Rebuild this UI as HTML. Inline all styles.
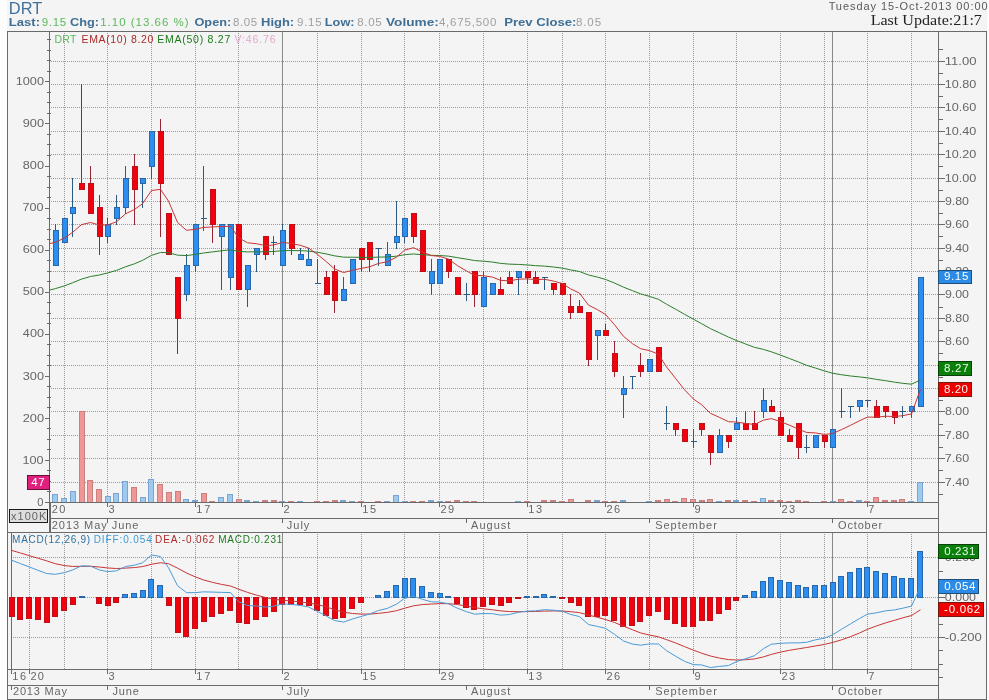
<!DOCTYPE html>
<html><head><meta charset="utf-8"><style>
html,body{margin:0;padding:0;background:#fdfdfd;width:989px;height:700px;overflow:hidden}
svg{display:block;will-change:transform}
</style></head><body>
<svg width="989" height="700" viewBox="0 0 989 700">
<g shape-rendering="crispEdges">
<rect x="0" y="0" width="989" height="700" fill="#fdfdfd" />
<rect x="7" y="0" width="980" height="700" fill="#f4f4f4" />
<line x1="51" y1="61.5" x2="938" y2="61.5" stroke="#9a9a9a" stroke-width="1" stroke-dasharray="1 1"/>
<line x1="51" y1="84.5" x2="938" y2="84.5" stroke="#9a9a9a" stroke-width="1" stroke-dasharray="1 1"/>
<line x1="51" y1="107.5" x2="938" y2="107.5" stroke="#9a9a9a" stroke-width="1" stroke-dasharray="1 1"/>
<line x1="51" y1="131.5" x2="938" y2="131.5" stroke="#9a9a9a" stroke-width="1" stroke-dasharray="1 1"/>
<line x1="51" y1="154.5" x2="938" y2="154.5" stroke="#9a9a9a" stroke-width="1" stroke-dasharray="1 1"/>
<line x1="51" y1="178.5" x2="938" y2="178.5" stroke="#9a9a9a" stroke-width="1" stroke-dasharray="1 1"/>
<line x1="51" y1="201.5" x2="938" y2="201.5" stroke="#9a9a9a" stroke-width="1" stroke-dasharray="1 1"/>
<line x1="51" y1="224.5" x2="938" y2="224.5" stroke="#9a9a9a" stroke-width="1" stroke-dasharray="1 1"/>
<line x1="51" y1="248.5" x2="938" y2="248.5" stroke="#9a9a9a" stroke-width="1" stroke-dasharray="1 1"/>
<line x1="51" y1="271.5" x2="938" y2="271.5" stroke="#9a9a9a" stroke-width="1" stroke-dasharray="1 1"/>
<line x1="51" y1="294.5" x2="938" y2="294.5" stroke="#9a9a9a" stroke-width="1" stroke-dasharray="1 1"/>
<line x1="51" y1="318.5" x2="938" y2="318.5" stroke="#9a9a9a" stroke-width="1" stroke-dasharray="1 1"/>
<line x1="51" y1="341.5" x2="938" y2="341.5" stroke="#9a9a9a" stroke-width="1" stroke-dasharray="1 1"/>
<line x1="51" y1="365.5" x2="938" y2="365.5" stroke="#9a9a9a" stroke-width="1" stroke-dasharray="1 1"/>
<line x1="51" y1="388.5" x2="938" y2="388.5" stroke="#9a9a9a" stroke-width="1" stroke-dasharray="1 1"/>
<line x1="51" y1="411.5" x2="938" y2="411.5" stroke="#9a9a9a" stroke-width="1" stroke-dasharray="1 1"/>
<line x1="51" y1="435.5" x2="938" y2="435.5" stroke="#9a9a9a" stroke-width="1" stroke-dasharray="1 1"/>
<line x1="51" y1="458.5" x2="938" y2="458.5" stroke="#9a9a9a" stroke-width="1" stroke-dasharray="1 1"/>
<line x1="51" y1="482.5" x2="938" y2="482.5" stroke="#9a9a9a" stroke-width="1" stroke-dasharray="1 1"/>
<line x1="64.5" y1="33" x2="64.5" y2="502" stroke="#9a9a9a" stroke-width="1" stroke-dasharray="1 1"/>
<line x1="107.5" y1="33" x2="107.5" y2="502" stroke="#9a9a9a" stroke-width="1" stroke-dasharray="1 1"/>
<line x1="151.5" y1="33" x2="151.5" y2="502" stroke="#9a9a9a" stroke-width="1" stroke-dasharray="1 1"/>
<line x1="195.5" y1="33" x2="195.5" y2="502" stroke="#9a9a9a" stroke-width="1" stroke-dasharray="1 1"/>
<line x1="238.5" y1="33" x2="238.5" y2="502" stroke="#9a9a9a" stroke-width="1" stroke-dasharray="1 1"/>
<line x1="317.5" y1="33" x2="317.5" y2="502" stroke="#9a9a9a" stroke-width="1" stroke-dasharray="1 1"/>
<line x1="361.5" y1="33" x2="361.5" y2="502" stroke="#9a9a9a" stroke-width="1" stroke-dasharray="1 1"/>
<line x1="404.5" y1="33" x2="404.5" y2="502" stroke="#9a9a9a" stroke-width="1" stroke-dasharray="1 1"/>
<line x1="439.5" y1="33" x2="439.5" y2="502" stroke="#9a9a9a" stroke-width="1" stroke-dasharray="1 1"/>
<line x1="483.5" y1="33" x2="483.5" y2="502" stroke="#9a9a9a" stroke-width="1" stroke-dasharray="1 1"/>
<line x1="527.5" y1="33" x2="527.5" y2="502" stroke="#9a9a9a" stroke-width="1" stroke-dasharray="1 1"/>
<line x1="562.5" y1="33" x2="562.5" y2="502" stroke="#9a9a9a" stroke-width="1" stroke-dasharray="1 1"/>
<line x1="605.5" y1="33" x2="605.5" y2="502" stroke="#9a9a9a" stroke-width="1" stroke-dasharray="1 1"/>
<line x1="649.5" y1="33" x2="649.5" y2="502" stroke="#9a9a9a" stroke-width="1" stroke-dasharray="1 1"/>
<line x1="693.5" y1="33" x2="693.5" y2="502" stroke="#9a9a9a" stroke-width="1" stroke-dasharray="1 1"/>
<line x1="736.5" y1="33" x2="736.5" y2="502" stroke="#9a9a9a" stroke-width="1" stroke-dasharray="1 1"/>
<line x1="780.5" y1="33" x2="780.5" y2="502" stroke="#9a9a9a" stroke-width="1" stroke-dasharray="1 1"/>
<line x1="824.5" y1="33" x2="824.5" y2="502" stroke="#9a9a9a" stroke-width="1" stroke-dasharray="1 1"/>
<line x1="867.5" y1="33" x2="867.5" y2="502" stroke="#9a9a9a" stroke-width="1" stroke-dasharray="1 1"/>
<line x1="911.5" y1="33" x2="911.5" y2="502" stroke="#9a9a9a" stroke-width="1" stroke-dasharray="1 1"/>
<line x1="282.5" y1="32" x2="282.5" y2="502" stroke="#8a8a8a" stroke-width="1"/>
<line x1="832.5" y1="32" x2="832.5" y2="502" stroke="#8a8a8a" stroke-width="1"/>
<line x1="13" y1="557.5" x2="938" y2="557.5" stroke="#9a9a9a" stroke-width="1" stroke-dasharray="1 1"/>
<line x1="13" y1="597.5" x2="938" y2="597.5" stroke="#9a9a9a" stroke-width="1" stroke-dasharray="1 1"/>
<line x1="13" y1="637.5" x2="938" y2="637.5" stroke="#9a9a9a" stroke-width="1" stroke-dasharray="1 1"/>
<line x1="29.5" y1="534" x2="29.5" y2="669" stroke="#9a9a9a" stroke-width="1" stroke-dasharray="1 1"/>
<line x1="64.5" y1="534" x2="64.5" y2="669" stroke="#9a9a9a" stroke-width="1" stroke-dasharray="1 1"/>
<line x1="107.5" y1="534" x2="107.5" y2="669" stroke="#9a9a9a" stroke-width="1" stroke-dasharray="1 1"/>
<line x1="151.5" y1="534" x2="151.5" y2="669" stroke="#9a9a9a" stroke-width="1" stroke-dasharray="1 1"/>
<line x1="195.5" y1="534" x2="195.5" y2="669" stroke="#9a9a9a" stroke-width="1" stroke-dasharray="1 1"/>
<line x1="238.5" y1="534" x2="238.5" y2="669" stroke="#9a9a9a" stroke-width="1" stroke-dasharray="1 1"/>
<line x1="317.5" y1="534" x2="317.5" y2="669" stroke="#9a9a9a" stroke-width="1" stroke-dasharray="1 1"/>
<line x1="361.5" y1="534" x2="361.5" y2="669" stroke="#9a9a9a" stroke-width="1" stroke-dasharray="1 1"/>
<line x1="404.5" y1="534" x2="404.5" y2="669" stroke="#9a9a9a" stroke-width="1" stroke-dasharray="1 1"/>
<line x1="439.5" y1="534" x2="439.5" y2="669" stroke="#9a9a9a" stroke-width="1" stroke-dasharray="1 1"/>
<line x1="483.5" y1="534" x2="483.5" y2="669" stroke="#9a9a9a" stroke-width="1" stroke-dasharray="1 1"/>
<line x1="527.5" y1="534" x2="527.5" y2="669" stroke="#9a9a9a" stroke-width="1" stroke-dasharray="1 1"/>
<line x1="562.5" y1="534" x2="562.5" y2="669" stroke="#9a9a9a" stroke-width="1" stroke-dasharray="1 1"/>
<line x1="605.5" y1="534" x2="605.5" y2="669" stroke="#9a9a9a" stroke-width="1" stroke-dasharray="1 1"/>
<line x1="649.5" y1="534" x2="649.5" y2="669" stroke="#9a9a9a" stroke-width="1" stroke-dasharray="1 1"/>
<line x1="693.5" y1="534" x2="693.5" y2="669" stroke="#9a9a9a" stroke-width="1" stroke-dasharray="1 1"/>
<line x1="736.5" y1="534" x2="736.5" y2="669" stroke="#9a9a9a" stroke-width="1" stroke-dasharray="1 1"/>
<line x1="780.5" y1="534" x2="780.5" y2="669" stroke="#9a9a9a" stroke-width="1" stroke-dasharray="1 1"/>
<line x1="824.5" y1="534" x2="824.5" y2="669" stroke="#9a9a9a" stroke-width="1" stroke-dasharray="1 1"/>
<line x1="867.5" y1="534" x2="867.5" y2="669" stroke="#9a9a9a" stroke-width="1" stroke-dasharray="1 1"/>
<line x1="911.5" y1="534" x2="911.5" y2="669" stroke="#9a9a9a" stroke-width="1" stroke-dasharray="1 1"/>
<line x1="282.5" y1="533" x2="282.5" y2="669" stroke="#8a8a8a" stroke-width="1"/>
<line x1="832.5" y1="533" x2="832.5" y2="669" stroke="#8a8a8a" stroke-width="1"/>
</g>
<g shape-rendering="crispEdges">
<rect x="52" y="494" width="6" height="8" fill="#6e9ccc" fill-opacity="0.9"/>
<rect x="53" y="495" width="4" height="7" fill="#a6d0f5" fill-opacity="0.85"/>
<rect x="61" y="498" width="6" height="4" fill="#6e9ccc" fill-opacity="0.9"/>
<rect x="62" y="499" width="4" height="3" fill="#a6d0f5" fill-opacity="0.85"/>
<rect x="70" y="491" width="6" height="11" fill="#6e9ccc" fill-opacity="0.9"/>
<rect x="71" y="492" width="4" height="10" fill="#a6d0f5" fill-opacity="0.85"/>
<rect x="79" y="411" width="6" height="91" fill="#c87474" fill-opacity="0.9"/>
<rect x="80" y="412" width="4" height="90" fill="#f49a9a" fill-opacity="0.85"/>
<rect x="87" y="480" width="6" height="22" fill="#c87474" fill-opacity="0.9"/>
<rect x="88" y="481" width="4" height="21" fill="#f49a9a" fill-opacity="0.85"/>
<rect x="96" y="489" width="6" height="13" fill="#c87474" fill-opacity="0.9"/>
<rect x="97" y="490" width="4" height="12" fill="#f49a9a" fill-opacity="0.85"/>
<rect x="105" y="496" width="6" height="6" fill="#6e9ccc" fill-opacity="0.9"/>
<rect x="106" y="497" width="4" height="5" fill="#a6d0f5" fill-opacity="0.85"/>
<rect x="113" y="493" width="6" height="9" fill="#6e9ccc" fill-opacity="0.9"/>
<rect x="114" y="494" width="4" height="8" fill="#a6d0f5" fill-opacity="0.85"/>
<rect x="122" y="481" width="6" height="21" fill="#6e9ccc" fill-opacity="0.9"/>
<rect x="123" y="482" width="4" height="20" fill="#a6d0f5" fill-opacity="0.85"/>
<rect x="131" y="487" width="6" height="15" fill="#c87474" fill-opacity="0.9"/>
<rect x="132" y="488" width="4" height="14" fill="#f49a9a" fill-opacity="0.85"/>
<rect x="140" y="497" width="6" height="5" fill="#6e9ccc" fill-opacity="0.9"/>
<rect x="141" y="498" width="4" height="4" fill="#a6d0f5" fill-opacity="0.85"/>
<rect x="148" y="479" width="6" height="23" fill="#6e9ccc" fill-opacity="0.9"/>
<rect x="149" y="480" width="4" height="22" fill="#a6d0f5" fill-opacity="0.85"/>
<rect x="157" y="484" width="6" height="18" fill="#c87474" fill-opacity="0.9"/>
<rect x="158" y="485" width="4" height="17" fill="#f49a9a" fill-opacity="0.85"/>
<rect x="166" y="492" width="6" height="10" fill="#c87474" fill-opacity="0.9"/>
<rect x="167" y="493" width="4" height="9" fill="#f49a9a" fill-opacity="0.85"/>
<rect x="175" y="491" width="6" height="11" fill="#c87474" fill-opacity="0.9"/>
<rect x="176" y="492" width="4" height="10" fill="#f49a9a" fill-opacity="0.85"/>
<rect x="183" y="499" width="6" height="3" fill="#6e9ccc" fill-opacity="0.9"/>
<rect x="184" y="500" width="4" height="2" fill="#a6d0f5" fill-opacity="0.85"/>
<rect x="192" y="500" width="6" height="2" fill="#6e9ccc" fill-opacity="0.9"/>
<rect x="201" y="493" width="6" height="9" fill="#c87474" fill-opacity="0.9"/>
<rect x="202" y="494" width="4" height="8" fill="#f49a9a" fill-opacity="0.85"/>
<rect x="209" y="501" width="6" height="1" fill="#c87474" fill-opacity="0.9"/>
<rect x="218" y="497" width="6" height="5" fill="#6e9ccc" fill-opacity="0.9"/>
<rect x="219" y="498" width="4" height="4" fill="#a6d0f5" fill-opacity="0.85"/>
<rect x="227" y="494" width="6" height="8" fill="#6e9ccc" fill-opacity="0.9"/>
<rect x="228" y="495" width="4" height="7" fill="#a6d0f5" fill-opacity="0.85"/>
<rect x="236" y="499" width="6" height="3" fill="#c87474" fill-opacity="0.9"/>
<rect x="237" y="500" width="4" height="2" fill="#f49a9a" fill-opacity="0.85"/>
<rect x="244" y="500" width="6" height="2" fill="#6e9ccc" fill-opacity="0.9"/>
<rect x="253" y="501" width="6" height="1" fill="#6e9ccc" fill-opacity="0.9"/>
<rect x="262" y="500" width="6" height="2" fill="#c87474" fill-opacity="0.9"/>
<rect x="271" y="500" width="6" height="2" fill="#c87474" fill-opacity="0.9"/>
<rect x="279" y="501" width="6" height="1" fill="#6e9ccc" fill-opacity="0.9"/>
<rect x="288" y="501" width="6" height="1" fill="#c87474" fill-opacity="0.9"/>
<rect x="297" y="501" width="6" height="1" fill="#6e9ccc" fill-opacity="0.9"/>
<rect x="314" y="501" width="6" height="1" fill="#c87474" fill-opacity="0.9"/>
<rect x="323" y="501" width="6" height="1" fill="#c87474" fill-opacity="0.9"/>
<rect x="332" y="500" width="6" height="2" fill="#c87474" fill-opacity="0.9"/>
<rect x="340" y="500" width="6" height="2" fill="#6e9ccc" fill-opacity="0.9"/>
<rect x="349" y="501" width="6" height="1" fill="#6e9ccc" fill-opacity="0.9"/>
<rect x="358" y="501" width="6" height="1" fill="#c87474" fill-opacity="0.9"/>
<rect x="375" y="501" width="6" height="1" fill="#c87474" fill-opacity="0.9"/>
<rect x="384" y="501" width="6" height="1" fill="#6e9ccc" fill-opacity="0.9"/>
<rect x="393" y="495" width="6" height="7" fill="#6e9ccc" fill-opacity="0.9"/>
<rect x="394" y="496" width="4" height="6" fill="#a6d0f5" fill-opacity="0.85"/>
<rect x="402" y="501" width="6" height="1" fill="#6e9ccc" fill-opacity="0.9"/>
<rect x="410" y="501" width="6" height="1" fill="#c87474" fill-opacity="0.9"/>
<rect x="419" y="501" width="6" height="1" fill="#c87474" fill-opacity="0.9"/>
<rect x="428" y="500" width="6" height="2" fill="#6e9ccc" fill-opacity="0.9"/>
<rect x="437" y="501" width="6" height="1" fill="#6e9ccc" fill-opacity="0.9"/>
<rect x="445" y="501" width="6" height="1" fill="#c87474" fill-opacity="0.9"/>
<rect x="454" y="500" width="6" height="2" fill="#c87474" fill-opacity="0.9"/>
<rect x="463" y="501" width="6" height="1" fill="#c87474" fill-opacity="0.9"/>
<rect x="471" y="501" width="6" height="1" fill="#c87474" fill-opacity="0.9"/>
<rect x="515" y="501" width="6" height="1" fill="#6e9ccc" fill-opacity="0.9"/>
<rect x="524" y="501" width="6" height="1" fill="#c87474" fill-opacity="0.9"/>
<rect x="541" y="500" width="6" height="2" fill="#c87474" fill-opacity="0.9"/>
<rect x="550" y="500" width="6" height="2" fill="#c87474" fill-opacity="0.9"/>
<rect x="559" y="501" width="6" height="1" fill="#c87474" fill-opacity="0.9"/>
<rect x="568" y="499" width="6" height="3" fill="#c87474" fill-opacity="0.9"/>
<rect x="569" y="500" width="4" height="2" fill="#f49a9a" fill-opacity="0.85"/>
<rect x="585" y="500" width="6" height="2" fill="#c87474" fill-opacity="0.9"/>
<rect x="594" y="500" width="6" height="2" fill="#6e9ccc" fill-opacity="0.9"/>
<rect x="602" y="501" width="6" height="1" fill="#c87474" fill-opacity="0.9"/>
<rect x="611" y="501" width="6" height="1" fill="#c87474" fill-opacity="0.9"/>
<rect x="620" y="500" width="6" height="2" fill="#6e9ccc" fill-opacity="0.9"/>
<rect x="646" y="501" width="6" height="1" fill="#6e9ccc" fill-opacity="0.9"/>
<rect x="655" y="500" width="6" height="2" fill="#c87474" fill-opacity="0.9"/>
<rect x="664" y="499" width="6" height="3" fill="#c87474" fill-opacity="0.9"/>
<rect x="665" y="500" width="4" height="2" fill="#f49a9a" fill-opacity="0.85"/>
<rect x="672" y="501" width="6" height="1" fill="#c87474" fill-opacity="0.9"/>
<rect x="681" y="498" width="6" height="4" fill="#c87474" fill-opacity="0.9"/>
<rect x="682" y="499" width="4" height="3" fill="#f49a9a" fill-opacity="0.85"/>
<rect x="690" y="499" width="6" height="3" fill="#c87474" fill-opacity="0.9"/>
<rect x="691" y="500" width="4" height="2" fill="#f49a9a" fill-opacity="0.85"/>
<rect x="699" y="500" width="6" height="2" fill="#c87474" fill-opacity="0.9"/>
<rect x="707" y="499" width="6" height="3" fill="#c87474" fill-opacity="0.9"/>
<rect x="708" y="500" width="4" height="2" fill="#f49a9a" fill-opacity="0.85"/>
<rect x="716" y="501" width="6" height="1" fill="#6e9ccc" fill-opacity="0.9"/>
<rect x="725" y="500" width="6" height="2" fill="#c87474" fill-opacity="0.9"/>
<rect x="733" y="500" width="6" height="2" fill="#6e9ccc" fill-opacity="0.9"/>
<rect x="742" y="500" width="6" height="2" fill="#c87474" fill-opacity="0.9"/>
<rect x="751" y="501" width="6" height="1" fill="#c87474" fill-opacity="0.9"/>
<rect x="760" y="498" width="6" height="4" fill="#6e9ccc" fill-opacity="0.9"/>
<rect x="761" y="499" width="4" height="3" fill="#a6d0f5" fill-opacity="0.85"/>
<rect x="768" y="500" width="6" height="2" fill="#c87474" fill-opacity="0.9"/>
<rect x="777" y="500" width="6" height="2" fill="#c87474" fill-opacity="0.9"/>
<rect x="786" y="501" width="6" height="1" fill="#c87474" fill-opacity="0.9"/>
<rect x="795" y="500" width="6" height="2" fill="#c87474" fill-opacity="0.9"/>
<rect x="803" y="501" width="6" height="1" fill="#c87474" fill-opacity="0.9"/>
<rect x="821" y="501" width="6" height="1" fill="#c87474" fill-opacity="0.9"/>
<rect x="830" y="501" width="6" height="1" fill="#6e9ccc" fill-opacity="0.9"/>
<rect x="838" y="499" width="6" height="3" fill="#c87474" fill-opacity="0.9"/>
<rect x="839" y="500" width="4" height="2" fill="#f49a9a" fill-opacity="0.85"/>
<rect x="847" y="501" width="6" height="1" fill="#c87474" fill-opacity="0.9"/>
<rect x="856" y="500" width="6" height="2" fill="#6e9ccc" fill-opacity="0.9"/>
<rect x="864" y="501" width="6" height="1" fill="#c87474" fill-opacity="0.9"/>
<rect x="873" y="497" width="6" height="5" fill="#c87474" fill-opacity="0.9"/>
<rect x="874" y="498" width="4" height="4" fill="#f49a9a" fill-opacity="0.85"/>
<rect x="882" y="500" width="6" height="2" fill="#c87474" fill-opacity="0.9"/>
<rect x="891" y="500" width="6" height="2" fill="#c87474" fill-opacity="0.9"/>
<rect x="899" y="499" width="6" height="3" fill="#c87474" fill-opacity="0.9"/>
<rect x="900" y="500" width="4" height="2" fill="#f49a9a" fill-opacity="0.85"/>
<rect x="908" y="501" width="6" height="1" fill="#6e9ccc" fill-opacity="0.9"/>
<rect x="917" y="482" width="6" height="20" fill="#6e9ccc" fill-opacity="0.9"/>
<rect x="918" y="483" width="4" height="19" fill="#a6d0f5" fill-opacity="0.85"/>
</g>
<g shape-rendering="crispEdges">
<rect x="55" y="224" width="1" height="42" fill="#2c5a80" />
<rect x="53" y="230" width="6" height="36" fill="#2868aa" />
<rect x="54" y="231" width="4" height="34" fill="#2b8ef0" />
<rect x="64" y="218" width="1" height="25" fill="#2c5a80" />
<rect x="62" y="218" width="6" height="25" fill="#2868aa" />
<rect x="63" y="219" width="4" height="23" fill="#2b8ef0" />
<rect x="72" y="178" width="1" height="59" fill="#2c5a80" />
<rect x="70" y="207" width="6" height="7" fill="#2868aa" />
<rect x="71" y="208" width="4" height="5" fill="#2b8ef0" />
<rect x="81" y="84" width="1" height="106" fill="#962636" />
<rect x="79" y="183" width="6" height="7" fill="#bc101c" />
<rect x="80" y="184" width="4" height="5" fill="#f2000c" />
<rect x="90" y="166" width="1" height="48" fill="#962636" />
<rect x="88" y="183" width="6" height="31" fill="#bc101c" />
<rect x="89" y="184" width="4" height="29" fill="#f2000c" />
<rect x="99" y="195" width="1" height="60" fill="#962636" />
<rect x="97" y="207" width="6" height="30" fill="#bc101c" />
<rect x="98" y="208" width="4" height="28" fill="#f2000c" />
<rect x="107" y="218" width="1" height="25" fill="#2c5a80" />
<rect x="105" y="224" width="6" height="13" fill="#2868aa" />
<rect x="106" y="225" width="4" height="11" fill="#2b8ef0" />
<rect x="116" y="195" width="1" height="30" fill="#2c5a80" />
<rect x="114" y="207" width="6" height="12" fill="#2868aa" />
<rect x="115" y="208" width="4" height="10" fill="#2b8ef0" />
<rect x="125" y="166" width="1" height="48" fill="#2c5a80" />
<rect x="123" y="178" width="6" height="30" fill="#2868aa" />
<rect x="124" y="179" width="4" height="28" fill="#2b8ef0" />
<rect x="134" y="154" width="1" height="71" fill="#962636" />
<rect x="132" y="166" width="6" height="24" fill="#bc101c" />
<rect x="133" y="167" width="4" height="22" fill="#f2000c" />
<rect x="142" y="178" width="1" height="30" fill="#2c5a80" />
<rect x="140" y="178" width="6" height="6" fill="#2868aa" />
<rect x="141" y="179" width="4" height="4" fill="#2b8ef0" />
<rect x="151" y="131" width="1" height="48" fill="#2c5a80" />
<rect x="149" y="131" width="6" height="36" fill="#2868aa" />
<rect x="150" y="132" width="4" height="34" fill="#2b8ef0" />
<rect x="160" y="119" width="1" height="118" fill="#962636" />
<rect x="158" y="131" width="6" height="53" fill="#bc101c" />
<rect x="159" y="132" width="4" height="51" fill="#f2000c" />
<rect x="168" y="213" width="1" height="42" fill="#962636" />
<rect x="166" y="213" width="6" height="42" fill="#bc101c" />
<rect x="167" y="214" width="4" height="40" fill="#f2000c" />
<rect x="177" y="277" width="1" height="77" fill="#962636" />
<rect x="175" y="277" width="6" height="42" fill="#bc101c" />
<rect x="176" y="278" width="4" height="40" fill="#f2000c" />
<rect x="186" y="254" width="1" height="47" fill="#2c5a80" />
<rect x="184" y="265" width="6" height="30" fill="#2868aa" />
<rect x="185" y="266" width="4" height="28" fill="#2b8ef0" />
<rect x="195" y="224" width="1" height="48" fill="#2c5a80" />
<rect x="193" y="224" width="6" height="42" fill="#2868aa" />
<rect x="194" y="225" width="4" height="40" fill="#2b8ef0" />
<rect x="203" y="166" width="1" height="65" fill="#2c5a80" />
<rect x="201" y="218" width="6" height="1" fill="#2c5a80" />
<rect x="212" y="189" width="1" height="54" fill="#962636" />
<rect x="210" y="189" width="6" height="36" fill="#bc101c" />
<rect x="211" y="190" width="4" height="34" fill="#f2000c" />
<rect x="221" y="224" width="1" height="66" fill="#2c5a80" />
<rect x="219" y="224" width="6" height="13" fill="#2868aa" />
<rect x="220" y="225" width="4" height="11" fill="#2b8ef0" />
<rect x="230" y="224" width="1" height="66" fill="#2c5a80" />
<rect x="228" y="224" width="6" height="54" fill="#2868aa" />
<rect x="229" y="225" width="4" height="52" fill="#2b8ef0" />
<rect x="238" y="224" width="1" height="66" fill="#962636" />
<rect x="236" y="224" width="6" height="66" fill="#bc101c" />
<rect x="237" y="225" width="4" height="64" fill="#f2000c" />
<rect x="247" y="265" width="1" height="42" fill="#2c5a80" />
<rect x="245" y="265" width="6" height="25" fill="#2868aa" />
<rect x="246" y="266" width="4" height="23" fill="#2b8ef0" />
<rect x="256" y="248" width="1" height="24" fill="#2c5a80" />
<rect x="254" y="248" width="6" height="7" fill="#2868aa" />
<rect x="255" y="249" width="4" height="5" fill="#2b8ef0" />
<rect x="265" y="236" width="1" height="24" fill="#962636" />
<rect x="263" y="236" width="6" height="19" fill="#bc101c" />
<rect x="264" y="237" width="4" height="17" fill="#f2000c" />
<rect x="273" y="236" width="1" height="19" fill="#2c5a80" />
<rect x="271" y="242" width="6" height="1" fill="#2c5a80" />
<rect x="282" y="224" width="1" height="42" fill="#2c5a80" />
<rect x="280" y="230" width="6" height="36" fill="#2868aa" />
<rect x="281" y="231" width="4" height="34" fill="#2b8ef0" />
<rect x="291" y="224" width="1" height="31" fill="#962636" />
<rect x="289" y="224" width="6" height="25" fill="#bc101c" />
<rect x="290" y="225" width="4" height="23" fill="#f2000c" />
<rect x="300" y="248" width="1" height="12" fill="#2c5a80" />
<rect x="298" y="254" width="6" height="6" fill="#2868aa" />
<rect x="299" y="255" width="4" height="4" fill="#2b8ef0" />
<rect x="308" y="248" width="1" height="18" fill="#2c5a80" />
<rect x="306" y="259" width="6" height="7" fill="#2868aa" />
<rect x="307" y="260" width="4" height="5" fill="#2b8ef0" />
<rect x="317" y="259" width="1" height="25" fill="#2c5a80" />
<rect x="315" y="283" width="6" height="1" fill="#2c5a80" />
<rect x="326" y="271" width="1" height="24" fill="#962636" />
<rect x="324" y="277" width="6" height="18" fill="#bc101c" />
<rect x="325" y="278" width="4" height="16" fill="#f2000c" />
<rect x="334" y="265" width="1" height="48" fill="#962636" />
<rect x="332" y="271" width="6" height="30" fill="#bc101c" />
<rect x="333" y="272" width="4" height="28" fill="#f2000c" />
<rect x="343" y="277" width="1" height="24" fill="#2c5a80" />
<rect x="341" y="289" width="6" height="12" fill="#2868aa" />
<rect x="342" y="290" width="4" height="10" fill="#2b8ef0" />
<rect x="352" y="259" width="1" height="25" fill="#2c5a80" />
<rect x="350" y="259" width="6" height="25" fill="#2868aa" />
<rect x="351" y="260" width="4" height="23" fill="#2b8ef0" />
<rect x="361" y="248" width="1" height="24" fill="#962636" />
<rect x="359" y="248" width="6" height="12" fill="#bc101c" />
<rect x="360" y="249" width="4" height="10" fill="#f2000c" />
<rect x="369" y="242" width="1" height="30" fill="#962636" />
<rect x="367" y="242" width="6" height="18" fill="#bc101c" />
<rect x="368" y="243" width="4" height="16" fill="#f2000c" />
<rect x="378" y="248" width="1" height="18" fill="#2c5a80" />
<rect x="376" y="248" width="6" height="1" fill="#2c5a80" />
<rect x="387" y="242" width="1" height="24" fill="#2c5a80" />
<rect x="385" y="254" width="6" height="12" fill="#2868aa" />
<rect x="386" y="255" width="4" height="10" fill="#2b8ef0" />
<rect x="396" y="201" width="1" height="48" fill="#2c5a80" />
<rect x="394" y="236" width="6" height="7" fill="#2868aa" />
<rect x="395" y="237" width="4" height="5" fill="#2b8ef0" />
<rect x="404" y="218" width="1" height="25" fill="#2c5a80" />
<rect x="402" y="218" width="6" height="19" fill="#2868aa" />
<rect x="403" y="219" width="4" height="17" fill="#2b8ef0" />
<rect x="413" y="213" width="1" height="30" fill="#962636" />
<rect x="411" y="213" width="6" height="24" fill="#bc101c" />
<rect x="412" y="214" width="4" height="22" fill="#f2000c" />
<rect x="422" y="230" width="1" height="42" fill="#962636" />
<rect x="420" y="230" width="6" height="42" fill="#bc101c" />
<rect x="421" y="231" width="4" height="40" fill="#f2000c" />
<rect x="431" y="259" width="1" height="36" fill="#2c5a80" />
<rect x="429" y="271" width="6" height="13" fill="#2868aa" />
<rect x="430" y="272" width="4" height="11" fill="#2b8ef0" />
<rect x="439" y="259" width="1" height="25" fill="#2c5a80" />
<rect x="437" y="259" width="6" height="25" fill="#2868aa" />
<rect x="438" y="260" width="4" height="23" fill="#2b8ef0" />
<rect x="448" y="259" width="1" height="19" fill="#962636" />
<rect x="446" y="259" width="6" height="13" fill="#bc101c" />
<rect x="447" y="260" width="4" height="11" fill="#f2000c" />
<rect x="457" y="277" width="1" height="18" fill="#962636" />
<rect x="455" y="277" width="6" height="18" fill="#bc101c" />
<rect x="456" y="278" width="4" height="16" fill="#f2000c" />
<rect x="466" y="283" width="1" height="18" fill="#2c5a80" />
<rect x="464" y="294" width="6" height="1" fill="#2c5a80" />
<rect x="474" y="271" width="1" height="36" fill="#962636" />
<rect x="472" y="271" width="6" height="24" fill="#bc101c" />
<rect x="473" y="272" width="4" height="22" fill="#f2000c" />
<rect x="483" y="271" width="1" height="36" fill="#2c5a80" />
<rect x="481" y="277" width="6" height="30" fill="#2868aa" />
<rect x="482" y="278" width="4" height="28" fill="#2b8ef0" />
<rect x="492" y="283" width="1" height="12" fill="#2c5a80" />
<rect x="490" y="283" width="6" height="12" fill="#2868aa" />
<rect x="491" y="284" width="4" height="10" fill="#2b8ef0" />
<rect x="500" y="277" width="1" height="18" fill="#962636" />
<rect x="498" y="289" width="6" height="6" fill="#bc101c" />
<rect x="499" y="290" width="4" height="4" fill="#f2000c" />
<rect x="509" y="271" width="1" height="13" fill="#962636" />
<rect x="507" y="277" width="6" height="7" fill="#bc101c" />
<rect x="508" y="278" width="4" height="5" fill="#f2000c" />
<rect x="518" y="271" width="1" height="24" fill="#2c5a80" />
<rect x="516" y="271" width="6" height="7" fill="#2868aa" />
<rect x="517" y="272" width="4" height="5" fill="#2b8ef0" />
<rect x="527" y="271" width="1" height="13" fill="#962636" />
<rect x="525" y="271" width="6" height="7" fill="#bc101c" />
<rect x="526" y="272" width="4" height="5" fill="#f2000c" />
<rect x="535" y="271" width="1" height="13" fill="#962636" />
<rect x="533" y="277" width="6" height="7" fill="#bc101c" />
<rect x="534" y="278" width="4" height="5" fill="#f2000c" />
<rect x="544" y="277" width="1" height="13" fill="#2c5a80" />
<rect x="542" y="277" width="6" height="1" fill="#2c5a80" />
<rect x="553" y="283" width="1" height="12" fill="#962636" />
<rect x="551" y="283" width="6" height="7" fill="#bc101c" />
<rect x="552" y="284" width="4" height="5" fill="#f2000c" />
<rect x="562" y="283" width="1" height="12" fill="#962636" />
<rect x="560" y="283" width="6" height="12" fill="#bc101c" />
<rect x="561" y="284" width="4" height="10" fill="#f2000c" />
<rect x="570" y="294" width="1" height="25" fill="#962636" />
<rect x="568" y="306" width="6" height="7" fill="#bc101c" />
<rect x="569" y="307" width="4" height="5" fill="#f2000c" />
<rect x="579" y="300" width="1" height="13" fill="#962636" />
<rect x="577" y="306" width="6" height="7" fill="#bc101c" />
<rect x="578" y="307" width="4" height="5" fill="#f2000c" />
<rect x="588" y="312" width="1" height="54" fill="#962636" />
<rect x="586" y="312" width="6" height="48" fill="#bc101c" />
<rect x="587" y="313" width="4" height="46" fill="#f2000c" />
<rect x="597" y="330" width="1" height="30" fill="#2c5a80" />
<rect x="595" y="330" width="6" height="6" fill="#2868aa" />
<rect x="596" y="331" width="4" height="4" fill="#2b8ef0" />
<rect x="605" y="324" width="1" height="12" fill="#962636" />
<rect x="603" y="330" width="6" height="6" fill="#bc101c" />
<rect x="604" y="331" width="4" height="4" fill="#f2000c" />
<rect x="614" y="341" width="1" height="36" fill="#962636" />
<rect x="612" y="353" width="6" height="19" fill="#bc101c" />
<rect x="613" y="354" width="4" height="17" fill="#f2000c" />
<rect x="623" y="376" width="1" height="42" fill="#2c5a80" />
<rect x="621" y="388" width="6" height="7" fill="#2868aa" />
<rect x="622" y="389" width="4" height="5" fill="#2b8ef0" />
<rect x="632" y="376" width="1" height="13" fill="#2c5a80" />
<rect x="630" y="376" width="6" height="1" fill="#2c5a80" />
<rect x="640" y="353" width="1" height="24" fill="#962636" />
<rect x="638" y="365" width="6" height="7" fill="#bc101c" />
<rect x="639" y="366" width="4" height="5" fill="#f2000c" />
<rect x="649" y="359" width="1" height="13" fill="#2c5a80" />
<rect x="647" y="359" width="6" height="13" fill="#2868aa" />
<rect x="648" y="360" width="4" height="11" fill="#2b8ef0" />
<rect x="658" y="347" width="1" height="25" fill="#962636" />
<rect x="656" y="347" width="6" height="25" fill="#bc101c" />
<rect x="657" y="348" width="4" height="23" fill="#f2000c" />
<rect x="666" y="406" width="1" height="24" fill="#2c5a80" />
<rect x="664" y="423" width="6" height="1" fill="#2c5a80" />
<rect x="675" y="423" width="1" height="13" fill="#962636" />
<rect x="673" y="423" width="6" height="7" fill="#bc101c" />
<rect x="674" y="424" width="4" height="5" fill="#f2000c" />
<rect x="684" y="429" width="1" height="13" fill="#962636" />
<rect x="682" y="429" width="6" height="13" fill="#bc101c" />
<rect x="683" y="430" width="4" height="11" fill="#f2000c" />
<rect x="693" y="429" width="1" height="19" fill="#2c5a80" />
<rect x="691" y="441" width="6" height="1" fill="#2c5a80" />
<rect x="701" y="423" width="1" height="13" fill="#962636" />
<rect x="699" y="423" width="6" height="7" fill="#bc101c" />
<rect x="700" y="424" width="4" height="5" fill="#f2000c" />
<rect x="710" y="435" width="1" height="30" fill="#962636" />
<rect x="708" y="435" width="6" height="18" fill="#bc101c" />
<rect x="709" y="436" width="4" height="16" fill="#f2000c" />
<rect x="719" y="429" width="1" height="24" fill="#2c5a80" />
<rect x="717" y="435" width="6" height="18" fill="#2868aa" />
<rect x="718" y="436" width="4" height="16" fill="#2b8ef0" />
<rect x="728" y="435" width="1" height="13" fill="#962636" />
<rect x="726" y="435" width="6" height="7" fill="#bc101c" />
<rect x="727" y="436" width="4" height="5" fill="#f2000c" />
<rect x="736" y="417" width="1" height="13" fill="#2c5a80" />
<rect x="734" y="423" width="6" height="7" fill="#2868aa" />
<rect x="735" y="424" width="4" height="5" fill="#2b8ef0" />
<rect x="745" y="411" width="1" height="19" fill="#962636" />
<rect x="743" y="423" width="6" height="7" fill="#bc101c" />
<rect x="744" y="424" width="4" height="5" fill="#f2000c" />
<rect x="754" y="411" width="1" height="19" fill="#962636" />
<rect x="752" y="423" width="6" height="7" fill="#bc101c" />
<rect x="753" y="424" width="4" height="5" fill="#f2000c" />
<rect x="763" y="388" width="1" height="30" fill="#2c5a80" />
<rect x="761" y="400" width="6" height="12" fill="#2868aa" />
<rect x="762" y="401" width="4" height="10" fill="#2b8ef0" />
<rect x="771" y="400" width="1" height="12" fill="#962636" />
<rect x="769" y="406" width="6" height="6" fill="#bc101c" />
<rect x="770" y="407" width="4" height="4" fill="#f2000c" />
<rect x="780" y="411" width="1" height="25" fill="#962636" />
<rect x="778" y="417" width="6" height="19" fill="#bc101c" />
<rect x="779" y="418" width="4" height="17" fill="#f2000c" />
<rect x="789" y="429" width="1" height="13" fill="#962636" />
<rect x="787" y="435" width="6" height="7" fill="#bc101c" />
<rect x="788" y="436" width="4" height="5" fill="#f2000c" />
<rect x="798" y="423" width="1" height="36" fill="#962636" />
<rect x="796" y="423" width="6" height="25" fill="#bc101c" />
<rect x="797" y="424" width="4" height="23" fill="#f2000c" />
<rect x="806" y="435" width="1" height="18" fill="#2c5a80" />
<rect x="804" y="447" width="6" height="1" fill="#2c5a80" />
<rect x="815" y="435" width="1" height="13" fill="#2c5a80" />
<rect x="813" y="435" width="6" height="13" fill="#2868aa" />
<rect x="814" y="436" width="4" height="11" fill="#2b8ef0" />
<rect x="824" y="435" width="1" height="13" fill="#962636" />
<rect x="822" y="435" width="6" height="7" fill="#bc101c" />
<rect x="823" y="436" width="4" height="5" fill="#f2000c" />
<rect x="832" y="429" width="1" height="19" fill="#2c5a80" />
<rect x="830" y="429" width="6" height="19" fill="#2868aa" />
<rect x="831" y="430" width="4" height="17" fill="#2b8ef0" />
<rect x="841" y="388" width="1" height="30" fill="#2c5a80" />
<rect x="839" y="411" width="6" height="1" fill="#2c5a80" />
<rect x="850" y="406" width="1" height="12" fill="#2c5a80" />
<rect x="848" y="406" width="6" height="1" fill="#2c5a80" />
<rect x="859" y="400" width="1" height="12" fill="#2c5a80" />
<rect x="857" y="400" width="6" height="7" fill="#2868aa" />
<rect x="858" y="401" width="4" height="5" fill="#2b8ef0" />
<rect x="867" y="400" width="1" height="7" fill="#2c5a80" />
<rect x="865" y="400" width="6" height="1" fill="#2c5a80" />
<rect x="876" y="400" width="1" height="18" fill="#962636" />
<rect x="874" y="406" width="6" height="12" fill="#bc101c" />
<rect x="875" y="407" width="4" height="10" fill="#f2000c" />
<rect x="885" y="406" width="1" height="12" fill="#962636" />
<rect x="883" y="406" width="6" height="6" fill="#bc101c" />
<rect x="884" y="407" width="4" height="4" fill="#f2000c" />
<rect x="894" y="411" width="1" height="13" fill="#962636" />
<rect x="892" y="411" width="6" height="7" fill="#bc101c" />
<rect x="893" y="412" width="4" height="5" fill="#f2000c" />
<rect x="902" y="406" width="1" height="12" fill="#2c5a80" />
<rect x="900" y="411" width="6" height="1" fill="#2c5a80" />
<rect x="911" y="406" width="1" height="12" fill="#2c5a80" />
<rect x="909" y="406" width="6" height="6" fill="#2868aa" />
<rect x="910" y="407" width="4" height="4" fill="#2b8ef0" />
<rect x="920" y="277" width="1" height="130" fill="#2c5a80" />
<rect x="918" y="277" width="6" height="130" fill="#2868aa" />
<rect x="919" y="278" width="4" height="128" fill="#2b8ef0" />
</g>
<polyline points="50.00,290.00 55.50,288.58 64.50,285.85 72.50,282.77 81.50,279.12 90.50,276.53 99.50,274.96 107.50,272.99 116.50,270.41 125.50,266.79 134.50,263.77 142.50,260.40 151.50,255.34 160.50,252.53 168.50,252.59 177.50,255.17 186.50,255.59 195.50,254.38 203.50,252.99 212.50,251.88 221.50,250.82 230.50,249.80 238.50,251.34 247.50,251.91 256.50,251.76 265.50,251.85 273.50,251.48 282.50,250.66 291.50,250.56 300.50,250.70 308.50,251.06 317.50,252.32 326.50,253.99 334.50,255.83 343.50,257.13 352.50,257.24 361.50,257.35 369.50,257.45 378.50,257.08 387.50,256.96 396.50,256.16 404.50,254.70 413.50,253.99 422.50,254.68 431.50,255.34 439.50,255.52 448.50,256.15 457.50,257.67 466.50,259.13 474.50,260.54 483.50,261.20 492.50,262.06 500.50,263.35 509.50,264.14 518.50,264.43 527.50,264.94 535.50,265.66 544.50,266.12 553.50,267.02 562.50,268.12 570.50,269.86 579.50,271.53 588.50,274.97 597.50,277.13 605.50,279.44 614.50,283.03 623.50,287.17 632.50,290.68 640.50,293.83 649.50,296.40 658.50,299.33 666.50,304.20 675.50,309.11 684.50,314.29 693.50,319.27 701.50,323.59 710.50,328.66 719.50,332.84 728.50,337.09 736.50,340.49 745.50,343.98 754.50,347.33 763.50,349.41 771.50,351.86 780.50,355.13 789.50,358.51 798.50,361.98 806.50,365.31 815.50,368.06 824.50,370.93 832.50,373.22 841.50,374.74 850.50,375.97 859.50,376.92 867.50,377.84 876.50,379.40 885.50,380.68 894.50,382.13 902.50,383.30 911.50,384.20 920.50,380.01" fill="none" stroke="#2b7d2b" stroke-width="1.0" stroke-linejoin="round" />
<polyline points="50.00,243.50 55.50,242.22 64.50,237.98 72.50,232.40 81.50,224.63 90.50,222.53 99.50,225.07 107.50,225.02 116.50,221.79 125.50,213.83 134.50,209.44 142.50,203.72 151.50,190.54 160.50,189.32 168.50,201.09 177.50,222.41 186.50,230.29 195.50,229.29 203.50,227.41 212.50,226.93 221.50,226.54 230.50,226.22 238.50,237.66 247.50,242.76 256.50,243.75 265.50,245.62 273.50,245.02 282.50,242.40 291.50,243.46 300.50,245.38 308.50,248.01 317.50,254.43 326.50,261.80 334.50,268.89 343.50,272.57 352.50,270.26 361.50,268.37 369.50,266.83 378.50,263.44 387.50,261.73 396.50,257.14 404.50,250.19 413.50,247.70 422.50,252.04 431.50,255.59 439.50,256.37 448.50,259.14 457.50,265.65 466.50,270.98 474.50,275.34 483.50,275.72 492.50,277.10 500.50,280.35 509.50,280.88 518.50,279.19 527.50,278.87 535.50,279.67 544.50,279.26 553.50,281.05 562.50,283.58 570.50,288.84 579.50,293.15 588.50,305.18 597.50,309.70 605.50,314.47 614.50,324.74 623.50,336.34 632.50,343.71 640.50,348.67 649.50,350.60 658.50,354.31 666.50,366.92 675.50,378.29 684.50,389.73 693.50,399.08 701.50,404.61 710.50,413.39 719.50,417.38 728.50,421.71 736.50,422.06 745.50,423.41 754.50,424.51 763.50,420.10 771.50,418.62 780.50,421.66 789.50,425.21 798.50,429.17 806.50,432.42 815.50,432.95 824.50,434.45 832.50,433.55 841.50,429.62 850.50,425.34 859.50,420.78 867.50,417.04 876.50,417.18 885.50,416.23 894.50,416.51 902.50,415.68 911.50,413.94 920.50,389.12" fill="none" stroke="#c83434" stroke-width="1.0" stroke-linejoin="round" />
<g shape-rendering="crispEdges">
<line x1="11.5" y1="532" x2="11.5" y2="669" stroke="#6a6a6a" stroke-width="1"/>
</g>
<g shape-rendering="crispEdges">
<rect x="9" y="597" width="6" height="20" fill="#bc101c" />
<rect x="10" y="598" width="4" height="18" fill="#f2000c" />
<rect x="17" y="597" width="6" height="23" fill="#bc101c" />
<rect x="18" y="598" width="4" height="21" fill="#f2000c" />
<rect x="26" y="597" width="6" height="22" fill="#bc101c" />
<rect x="27" y="598" width="4" height="20" fill="#f2000c" />
<rect x="35" y="597" width="6" height="23" fill="#bc101c" />
<rect x="36" y="598" width="4" height="21" fill="#f2000c" />
<rect x="44" y="597" width="6" height="26" fill="#bc101c" />
<rect x="45" y="598" width="4" height="24" fill="#f2000c" />
<rect x="52" y="597" width="6" height="20" fill="#bc101c" />
<rect x="53" y="598" width="4" height="18" fill="#f2000c" />
<rect x="61" y="597" width="6" height="14" fill="#bc101c" />
<rect x="62" y="598" width="4" height="12" fill="#f2000c" />
<rect x="70" y="597" width="6" height="8" fill="#bc101c" />
<rect x="71" y="598" width="4" height="6" fill="#f2000c" />
<rect x="79" y="596" width="6" height="2" fill="#2767a8" />
<rect x="96" y="597" width="6" height="7" fill="#bc101c" />
<rect x="97" y="598" width="4" height="5" fill="#f2000c" />
<rect x="105" y="597" width="6" height="9" fill="#bc101c" />
<rect x="106" y="598" width="4" height="7" fill="#f2000c" />
<rect x="113" y="597" width="6" height="6" fill="#bc101c" />
<rect x="114" y="598" width="4" height="4" fill="#f2000c" />
<rect x="122" y="594" width="6" height="4" fill="#2868aa" />
<rect x="123" y="595" width="4" height="2" fill="#2b8ef0" />
<rect x="131" y="593" width="6" height="5" fill="#2868aa" />
<rect x="132" y="594" width="4" height="3" fill="#2b8ef0" />
<rect x="140" y="590" width="6" height="8" fill="#2868aa" />
<rect x="141" y="591" width="4" height="6" fill="#2b8ef0" />
<rect x="148" y="579" width="6" height="19" fill="#2868aa" />
<rect x="149" y="580" width="4" height="17" fill="#2b8ef0" />
<rect x="157" y="585" width="6" height="13" fill="#2868aa" />
<rect x="158" y="586" width="4" height="11" fill="#2b8ef0" />
<rect x="166" y="597" width="6" height="9" fill="#bc101c" />
<rect x="167" y="598" width="4" height="7" fill="#f2000c" />
<rect x="175" y="597" width="6" height="36" fill="#bc101c" />
<rect x="176" y="598" width="4" height="34" fill="#f2000c" />
<rect x="183" y="597" width="6" height="40" fill="#bc101c" />
<rect x="184" y="598" width="4" height="38" fill="#f2000c" />
<rect x="192" y="597" width="6" height="32" fill="#bc101c" />
<rect x="193" y="598" width="4" height="30" fill="#f2000c" />
<rect x="201" y="597" width="6" height="25" fill="#bc101c" />
<rect x="202" y="598" width="4" height="23" fill="#f2000c" />
<rect x="209" y="597" width="6" height="20" fill="#bc101c" />
<rect x="210" y="598" width="4" height="18" fill="#f2000c" />
<rect x="218" y="597" width="6" height="17" fill="#bc101c" />
<rect x="219" y="598" width="4" height="15" fill="#f2000c" />
<rect x="227" y="597" width="6" height="14" fill="#bc101c" />
<rect x="228" y="598" width="4" height="12" fill="#f2000c" />
<rect x="236" y="597" width="6" height="26" fill="#bc101c" />
<rect x="237" y="598" width="4" height="24" fill="#f2000c" />
<rect x="244" y="597" width="6" height="27" fill="#bc101c" />
<rect x="245" y="598" width="4" height="25" fill="#f2000c" />
<rect x="253" y="597" width="6" height="23" fill="#bc101c" />
<rect x="254" y="598" width="4" height="21" fill="#f2000c" />
<rect x="262" y="597" width="6" height="20" fill="#bc101c" />
<rect x="263" y="598" width="4" height="18" fill="#f2000c" />
<rect x="271" y="597" width="6" height="15" fill="#bc101c" />
<rect x="272" y="598" width="4" height="13" fill="#f2000c" />
<rect x="279" y="597" width="6" height="8" fill="#bc101c" />
<rect x="280" y="598" width="4" height="6" fill="#f2000c" />
<rect x="288" y="597" width="6" height="8" fill="#bc101c" />
<rect x="289" y="598" width="4" height="6" fill="#f2000c" />
<rect x="297" y="597" width="6" height="8" fill="#bc101c" />
<rect x="298" y="598" width="4" height="6" fill="#f2000c" />
<rect x="306" y="597" width="6" height="9" fill="#bc101c" />
<rect x="307" y="598" width="4" height="7" fill="#f2000c" />
<rect x="314" y="597" width="6" height="14" fill="#bc101c" />
<rect x="315" y="598" width="4" height="12" fill="#f2000c" />
<rect x="323" y="597" width="6" height="19" fill="#bc101c" />
<rect x="324" y="598" width="4" height="17" fill="#f2000c" />
<rect x="332" y="597" width="6" height="22" fill="#bc101c" />
<rect x="333" y="598" width="4" height="20" fill="#f2000c" />
<rect x="340" y="597" width="6" height="21" fill="#bc101c" />
<rect x="341" y="598" width="4" height="19" fill="#f2000c" />
<rect x="349" y="597" width="6" height="12" fill="#bc101c" />
<rect x="350" y="598" width="4" height="10" fill="#f2000c" />
<rect x="358" y="597" width="6" height="6" fill="#bc101c" />
<rect x="359" y="598" width="4" height="4" fill="#f2000c" />
<rect x="375" y="595" width="6" height="3" fill="#2868aa" />
<rect x="376" y="596" width="4" height="1" fill="#2b8ef0" />
<rect x="384" y="591" width="6" height="7" fill="#2868aa" />
<rect x="385" y="592" width="4" height="5" fill="#2b8ef0" />
<rect x="393" y="585" width="6" height="13" fill="#2868aa" />
<rect x="394" y="586" width="4" height="11" fill="#2b8ef0" />
<rect x="402" y="578" width="6" height="20" fill="#2868aa" />
<rect x="403" y="579" width="4" height="18" fill="#2b8ef0" />
<rect x="410" y="578" width="6" height="20" fill="#2868aa" />
<rect x="411" y="579" width="4" height="18" fill="#2b8ef0" />
<rect x="419" y="586" width="6" height="12" fill="#2868aa" />
<rect x="420" y="587" width="4" height="10" fill="#2b8ef0" />
<rect x="428" y="592" width="6" height="6" fill="#2868aa" />
<rect x="429" y="593" width="4" height="4" fill="#2b8ef0" />
<rect x="437" y="593" width="6" height="5" fill="#2868aa" />
<rect x="438" y="594" width="4" height="3" fill="#2b8ef0" />
<rect x="445" y="596" width="6" height="2" fill="#2767a8" />
<rect x="454" y="597" width="6" height="7" fill="#bc101c" />
<rect x="455" y="598" width="4" height="5" fill="#f2000c" />
<rect x="463" y="597" width="6" height="11" fill="#bc101c" />
<rect x="464" y="598" width="4" height="9" fill="#f2000c" />
<rect x="471" y="597" width="6" height="13" fill="#bc101c" />
<rect x="472" y="598" width="4" height="11" fill="#f2000c" />
<rect x="480" y="597" width="6" height="10" fill="#bc101c" />
<rect x="481" y="598" width="4" height="8" fill="#f2000c" />
<rect x="489" y="597" width="6" height="8" fill="#bc101c" />
<rect x="490" y="598" width="4" height="6" fill="#f2000c" />
<rect x="498" y="597" width="6" height="9" fill="#bc101c" />
<rect x="499" y="598" width="4" height="7" fill="#f2000c" />
<rect x="506" y="597" width="6" height="6" fill="#bc101c" />
<rect x="507" y="598" width="4" height="4" fill="#f2000c" />
<rect x="515" y="597" width="6" height="2" fill="#bc101c" />
<rect x="516" y="598" width="4" height="0" fill="#f2000c" />
<rect x="524" y="596" width="6" height="2" fill="#2767a8" />
<rect x="533" y="596" width="6" height="2" fill="#2767a8" />
<rect x="541" y="594" width="6" height="4" fill="#2868aa" />
<rect x="542" y="595" width="4" height="2" fill="#2b8ef0" />
<rect x="550" y="596" width="6" height="2" fill="#2767a8" />
<rect x="559" y="597" width="6" height="2" fill="#bc101c" />
<rect x="560" y="598" width="4" height="0" fill="#f2000c" />
<rect x="568" y="597" width="6" height="6" fill="#bc101c" />
<rect x="569" y="598" width="4" height="4" fill="#f2000c" />
<rect x="576" y="597" width="6" height="9" fill="#bc101c" />
<rect x="577" y="598" width="4" height="7" fill="#f2000c" />
<rect x="585" y="597" width="6" height="20" fill="#bc101c" />
<rect x="586" y="598" width="4" height="18" fill="#f2000c" />
<rect x="594" y="597" width="6" height="20" fill="#bc101c" />
<rect x="595" y="598" width="4" height="18" fill="#f2000c" />
<rect x="602" y="597" width="6" height="19" fill="#bc101c" />
<rect x="603" y="598" width="4" height="17" fill="#f2000c" />
<rect x="611" y="597" width="6" height="24" fill="#bc101c" />
<rect x="612" y="598" width="4" height="22" fill="#f2000c" />
<rect x="620" y="597" width="6" height="30" fill="#bc101c" />
<rect x="621" y="598" width="4" height="28" fill="#f2000c" />
<rect x="629" y="597" width="6" height="29" fill="#bc101c" />
<rect x="630" y="598" width="4" height="27" fill="#f2000c" />
<rect x="637" y="597" width="6" height="25" fill="#bc101c" />
<rect x="638" y="598" width="4" height="23" fill="#f2000c" />
<rect x="646" y="597" width="6" height="19" fill="#bc101c" />
<rect x="647" y="598" width="4" height="17" fill="#f2000c" />
<rect x="655" y="597" width="6" height="15" fill="#bc101c" />
<rect x="656" y="598" width="4" height="13" fill="#f2000c" />
<rect x="664" y="597" width="6" height="23" fill="#bc101c" />
<rect x="665" y="598" width="4" height="21" fill="#f2000c" />
<rect x="672" y="597" width="6" height="27" fill="#bc101c" />
<rect x="673" y="598" width="4" height="25" fill="#f2000c" />
<rect x="681" y="597" width="6" height="30" fill="#bc101c" />
<rect x="682" y="598" width="4" height="28" fill="#f2000c" />
<rect x="690" y="597" width="6" height="30" fill="#bc101c" />
<rect x="691" y="598" width="4" height="28" fill="#f2000c" />
<rect x="699" y="597" width="6" height="24" fill="#bc101c" />
<rect x="700" y="598" width="4" height="22" fill="#f2000c" />
<rect x="707" y="597" width="6" height="24" fill="#bc101c" />
<rect x="708" y="598" width="4" height="22" fill="#f2000c" />
<rect x="716" y="597" width="6" height="17" fill="#bc101c" />
<rect x="717" y="598" width="4" height="15" fill="#f2000c" />
<rect x="725" y="597" width="6" height="13" fill="#bc101c" />
<rect x="726" y="598" width="4" height="11" fill="#f2000c" />
<rect x="733" y="597" width="6" height="4" fill="#bc101c" />
<rect x="734" y="598" width="4" height="2" fill="#f2000c" />
<rect x="742" y="595" width="6" height="3" fill="#2868aa" />
<rect x="743" y="596" width="4" height="1" fill="#2b8ef0" />
<rect x="751" y="591" width="6" height="7" fill="#2868aa" />
<rect x="752" y="592" width="4" height="5" fill="#2b8ef0" />
<rect x="760" y="581" width="6" height="17" fill="#2868aa" />
<rect x="761" y="582" width="4" height="15" fill="#2b8ef0" />
<rect x="768" y="577" width="6" height="21" fill="#2868aa" />
<rect x="769" y="578" width="4" height="19" fill="#2b8ef0" />
<rect x="777" y="580" width="6" height="18" fill="#2868aa" />
<rect x="778" y="581" width="4" height="16" fill="#2b8ef0" />
<rect x="786" y="582" width="6" height="16" fill="#2868aa" />
<rect x="787" y="583" width="4" height="14" fill="#2b8ef0" />
<rect x="795" y="585" width="6" height="13" fill="#2868aa" />
<rect x="796" y="586" width="4" height="11" fill="#2b8ef0" />
<rect x="803" y="587" width="6" height="11" fill="#2868aa" />
<rect x="804" y="588" width="4" height="9" fill="#2b8ef0" />
<rect x="812" y="585" width="6" height="13" fill="#2868aa" />
<rect x="813" y="586" width="4" height="11" fill="#2b8ef0" />
<rect x="821" y="585" width="6" height="13" fill="#2868aa" />
<rect x="822" y="586" width="4" height="11" fill="#2b8ef0" />
<rect x="830" y="582" width="6" height="16" fill="#2868aa" />
<rect x="831" y="583" width="4" height="14" fill="#2b8ef0" />
<rect x="838" y="576" width="6" height="22" fill="#2868aa" />
<rect x="839" y="577" width="4" height="20" fill="#2b8ef0" />
<rect x="847" y="572" width="6" height="26" fill="#2868aa" />
<rect x="848" y="573" width="4" height="24" fill="#2b8ef0" />
<rect x="856" y="568" width="6" height="30" fill="#2868aa" />
<rect x="857" y="569" width="4" height="28" fill="#2b8ef0" />
<rect x="864" y="567" width="6" height="31" fill="#2868aa" />
<rect x="865" y="568" width="4" height="29" fill="#2b8ef0" />
<rect x="873" y="571" width="6" height="27" fill="#2868aa" />
<rect x="874" y="572" width="4" height="25" fill="#2b8ef0" />
<rect x="882" y="573" width="6" height="25" fill="#2868aa" />
<rect x="883" y="574" width="4" height="23" fill="#2b8ef0" />
<rect x="891" y="576" width="6" height="22" fill="#2868aa" />
<rect x="892" y="577" width="4" height="20" fill="#2b8ef0" />
<rect x="899" y="578" width="6" height="20" fill="#2868aa" />
<rect x="900" y="579" width="4" height="18" fill="#2b8ef0" />
<rect x="908" y="578" width="6" height="20" fill="#2868aa" />
<rect x="909" y="579" width="4" height="18" fill="#2b8ef0" />
<rect x="917" y="551" width="6" height="47" fill="#2868aa" />
<rect x="918" y="552" width="4" height="45" fill="#2b8ef0" />
</g>
<polyline points="11.50,550.35 20.50,553.03 29.50,555.72 37.50,558.10 46.50,560.78 55.50,563.79 64.50,565.56 72.50,566.44 81.50,566.33 90.50,566.30 99.50,567.03 107.50,567.95 116.50,568.53 125.50,568.14 134.50,567.54 142.50,566.60 151.50,564.27 160.50,562.72 168.50,563.73 177.50,568.12 186.50,573.03 195.50,576.95 203.50,579.93 212.50,582.36 221.50,584.36 230.50,586.01 238.50,589.13 247.50,592.40 256.50,595.12 265.50,597.51 273.50,599.26 282.50,600.19 291.50,601.03 300.50,601.92 308.50,602.94 317.50,604.62 326.50,606.93 334.50,609.64 343.50,612.12 352.50,613.50 361.50,614.07 369.50,614.07 378.50,613.35 387.50,612.35 396.50,610.71 404.50,608.24 413.50,605.84 422.50,604.55 431.50,604.00 439.50,603.61 448.50,603.65 457.50,604.57 466.50,605.99 474.50,607.63 483.50,608.81 492.50,609.78 500.50,610.85 509.50,611.59 518.50,611.72 527.50,611.60 535.50,611.45 544.50,611.09 553.50,610.92 562.50,611.00 570.50,611.68 579.50,612.67 588.50,615.04 597.50,617.31 605.50,619.52 614.50,622.48 623.50,626.18 632.50,629.76 640.50,632.85 649.50,635.06 658.50,636.85 666.50,639.62 675.50,642.92 684.50,646.60 693.50,650.21 701.50,653.15 710.50,656.03 719.50,658.10 728.50,659.59 736.50,660.00 745.50,659.74 754.50,658.93 763.50,656.87 771.50,654.33 780.50,652.13 789.50,650.29 798.50,648.81 806.50,647.52 815.50,645.98 824.50,644.41 832.50,642.48 841.50,639.85 850.50,636.66 859.50,633.03 867.50,629.24 876.50,625.95 885.50,622.93 894.50,620.33 902.50,617.92 911.50,615.55 920.50,609.78" fill="none" stroke="#c83434" stroke-width="1.0" stroke-linejoin="round" />
<polyline points="11.50,560.19 20.50,563.62 29.50,567.04 37.50,570.08 46.50,573.51 55.50,574.30 64.50,572.63 72.50,570.00 81.50,565.86 90.50,566.17 99.50,569.96 107.50,571.64 116.50,570.86 125.50,566.57 134.50,565.15 142.50,562.81 151.50,554.99 160.50,556.52 168.50,567.76 177.50,585.68 186.50,592.68 195.50,592.63 203.50,591.84 212.50,592.09 221.50,592.35 230.50,592.60 238.50,601.63 247.50,605.47 256.50,605.99 265.50,607.10 273.50,606.26 282.50,603.91 291.50,604.38 300.50,605.47 308.50,607.03 317.50,611.34 326.50,616.15 334.50,620.50 343.50,622.05 352.50,618.99 361.50,616.35 369.50,614.07 378.50,610.49 387.50,608.34 396.50,604.14 404.50,598.37 413.50,596.24 422.50,599.37 431.50,601.80 439.50,602.05 448.50,603.80 457.50,608.28 466.50,611.67 474.50,614.16 483.50,613.53 492.50,613.65 500.50,615.15 509.50,614.54 518.50,612.26 527.50,611.10 535.50,610.84 544.50,609.68 553.50,610.23 562.50,611.31 570.50,614.40 579.50,616.62 588.50,624.52 597.50,626.41 605.50,628.36 614.50,634.33 623.50,640.97 632.50,644.08 640.50,645.19 649.50,643.92 658.50,643.99 666.50,650.69 675.50,656.14 684.50,661.33 693.50,664.66 701.50,664.92 710.50,667.54 719.50,666.40 728.50,665.51 736.50,661.65 745.50,658.69 754.50,655.68 763.50,648.66 771.50,644.18 780.50,643.32 789.50,642.92 798.50,642.89 806.50,642.35 815.50,639.81 824.50,638.14 832.50,634.77 841.50,629.32 850.50,623.88 859.50,618.52 867.50,614.08 876.50,612.80 885.50,610.83 894.50,609.93 902.50,608.28 911.50,606.07 920.50,586.69" fill="none" stroke="#4a9ad8" stroke-width="1.0" stroke-linejoin="round" />
<g shape-rendering="crispEdges">
<line x1="7" y1="31.5" x2="987" y2="31.5" stroke="#6a6a6a" stroke-width="1"/>
<line x1="7.5" y1="31" x2="7.5" y2="700" stroke="#6a6a6a" stroke-width="1"/>
<line x1="986.5" y1="31" x2="986.5" y2="700" stroke="#6a6a6a" stroke-width="1"/>
<line x1="7" y1="699.5" x2="987" y2="699.5" stroke="#6a6a6a" stroke-width="1"/>
<line x1="49.5" y1="31" x2="49.5" y2="533" stroke="#6a6a6a" stroke-width="1"/>
<line x1="938.5" y1="31" x2="938.5" y2="700" stroke="#6a6a6a" stroke-width="1"/>
<line x1="49" y1="502.5" x2="939" y2="502.5" stroke="#6a6a6a" stroke-width="1"/>
<line x1="49" y1="518.5" x2="939" y2="518.5" stroke="#6a6a6a" stroke-width="1"/>
<line x1="7" y1="532.5" x2="987" y2="532.5" stroke="#6a6a6a" stroke-width="1"/>
<line x1="7" y1="669.5" x2="939" y2="669.5" stroke="#6a6a6a" stroke-width="1"/>
<line x1="7" y1="685.5" x2="939" y2="685.5" stroke="#6a6a6a" stroke-width="1"/>
</g>
<g shape-rendering="crispEdges">
<line x1="50.5" y1="502" x2="50.5" y2="532" stroke="#6a6a6a" stroke-width="1"/>
</g>
<g shape-rendering="crispEdges">
<line x1="11.5" y1="669" x2="11.5" y2="674" stroke="#6a6a6a" stroke-width="1"/>
<line x1="29.5" y1="669" x2="29.5" y2="674" stroke="#6a6a6a" stroke-width="1"/>
<line x1="107.5" y1="502" x2="107.5" y2="507" stroke="#6a6a6a" stroke-width="1"/>
<line x1="107.5" y1="669" x2="107.5" y2="674" stroke="#6a6a6a" stroke-width="1"/>
<line x1="195.5" y1="502" x2="195.5" y2="507" stroke="#6a6a6a" stroke-width="1"/>
<line x1="195.5" y1="669" x2="195.5" y2="674" stroke="#6a6a6a" stroke-width="1"/>
<line x1="282.5" y1="502" x2="282.5" y2="507" stroke="#6a6a6a" stroke-width="1"/>
<line x1="282.5" y1="669" x2="282.5" y2="674" stroke="#6a6a6a" stroke-width="1"/>
<line x1="361.5" y1="502" x2="361.5" y2="507" stroke="#6a6a6a" stroke-width="1"/>
<line x1="361.5" y1="669" x2="361.5" y2="674" stroke="#6a6a6a" stroke-width="1"/>
<line x1="439.5" y1="502" x2="439.5" y2="507" stroke="#6a6a6a" stroke-width="1"/>
<line x1="439.5" y1="669" x2="439.5" y2="674" stroke="#6a6a6a" stroke-width="1"/>
<line x1="527.5" y1="502" x2="527.5" y2="507" stroke="#6a6a6a" stroke-width="1"/>
<line x1="527.5" y1="669" x2="527.5" y2="674" stroke="#6a6a6a" stroke-width="1"/>
<line x1="605.5" y1="502" x2="605.5" y2="507" stroke="#6a6a6a" stroke-width="1"/>
<line x1="605.5" y1="669" x2="605.5" y2="674" stroke="#6a6a6a" stroke-width="1"/>
<line x1="693.5" y1="502" x2="693.5" y2="507" stroke="#6a6a6a" stroke-width="1"/>
<line x1="693.5" y1="669" x2="693.5" y2="674" stroke="#6a6a6a" stroke-width="1"/>
<line x1="780.5" y1="502" x2="780.5" y2="507" stroke="#6a6a6a" stroke-width="1"/>
<line x1="780.5" y1="669" x2="780.5" y2="674" stroke="#6a6a6a" stroke-width="1"/>
<line x1="867.5" y1="502" x2="867.5" y2="507" stroke="#6a6a6a" stroke-width="1"/>
<line x1="867.5" y1="669" x2="867.5" y2="674" stroke="#6a6a6a" stroke-width="1"/>
<line x1="11.5" y1="685" x2="11.5" y2="690" stroke="#6a6a6a" stroke-width="1"/>
<line x1="107.5" y1="518" x2="107.5" y2="523" stroke="#6a6a6a" stroke-width="1"/>
<line x1="107.5" y1="685" x2="107.5" y2="690" stroke="#6a6a6a" stroke-width="1"/>
<line x1="282.5" y1="518" x2="282.5" y2="523" stroke="#6a6a6a" stroke-width="1"/>
<line x1="282.5" y1="685" x2="282.5" y2="690" stroke="#6a6a6a" stroke-width="1"/>
<line x1="466.5" y1="518" x2="466.5" y2="523" stroke="#6a6a6a" stroke-width="1"/>
<line x1="466.5" y1="685" x2="466.5" y2="690" stroke="#6a6a6a" stroke-width="1"/>
<line x1="649.5" y1="518" x2="649.5" y2="523" stroke="#6a6a6a" stroke-width="1"/>
<line x1="649.5" y1="685" x2="649.5" y2="690" stroke="#6a6a6a" stroke-width="1"/>
<line x1="832.5" y1="518" x2="832.5" y2="523" stroke="#6a6a6a" stroke-width="1"/>
<line x1="832.5" y1="685" x2="832.5" y2="690" stroke="#6a6a6a" stroke-width="1"/>
<line x1="45" y1="502.5" x2="49" y2="502.5" stroke="#6a6a6a" stroke-width="1"/>
<line x1="47" y1="491.5" x2="51" y2="491.5" stroke="#6a6a6a" stroke-width="1"/>
<line x1="47" y1="481.5" x2="51" y2="481.5" stroke="#6a6a6a" stroke-width="1"/>
<line x1="47" y1="470.5" x2="51" y2="470.5" stroke="#6a6a6a" stroke-width="1"/>
<line x1="45" y1="460.5" x2="49" y2="460.5" stroke="#6a6a6a" stroke-width="1"/>
<line x1="47" y1="449.5" x2="51" y2="449.5" stroke="#6a6a6a" stroke-width="1"/>
<line x1="47" y1="439.5" x2="51" y2="439.5" stroke="#6a6a6a" stroke-width="1"/>
<line x1="47" y1="428.5" x2="51" y2="428.5" stroke="#6a6a6a" stroke-width="1"/>
<line x1="45" y1="418.5" x2="49" y2="418.5" stroke="#6a6a6a" stroke-width="1"/>
<line x1="47" y1="407.5" x2="51" y2="407.5" stroke="#6a6a6a" stroke-width="1"/>
<line x1="47" y1="397.5" x2="51" y2="397.5" stroke="#6a6a6a" stroke-width="1"/>
<line x1="47" y1="386.5" x2="51" y2="386.5" stroke="#6a6a6a" stroke-width="1"/>
<line x1="45" y1="376.5" x2="49" y2="376.5" stroke="#6a6a6a" stroke-width="1"/>
<line x1="47" y1="365.5" x2="51" y2="365.5" stroke="#6a6a6a" stroke-width="1"/>
<line x1="47" y1="355.5" x2="51" y2="355.5" stroke="#6a6a6a" stroke-width="1"/>
<line x1="47" y1="344.5" x2="51" y2="344.5" stroke="#6a6a6a" stroke-width="1"/>
<line x1="45" y1="334.5" x2="49" y2="334.5" stroke="#6a6a6a" stroke-width="1"/>
<line x1="47" y1="323.5" x2="51" y2="323.5" stroke="#6a6a6a" stroke-width="1"/>
<line x1="47" y1="313.5" x2="51" y2="313.5" stroke="#6a6a6a" stroke-width="1"/>
<line x1="47" y1="302.5" x2="51" y2="302.5" stroke="#6a6a6a" stroke-width="1"/>
<line x1="45" y1="292.5" x2="49" y2="292.5" stroke="#6a6a6a" stroke-width="1"/>
<line x1="47" y1="281.5" x2="51" y2="281.5" stroke="#6a6a6a" stroke-width="1"/>
<line x1="47" y1="271.5" x2="51" y2="271.5" stroke="#6a6a6a" stroke-width="1"/>
<line x1="47" y1="260.5" x2="51" y2="260.5" stroke="#6a6a6a" stroke-width="1"/>
<line x1="45" y1="250.5" x2="49" y2="250.5" stroke="#6a6a6a" stroke-width="1"/>
<line x1="47" y1="239.5" x2="51" y2="239.5" stroke="#6a6a6a" stroke-width="1"/>
<line x1="47" y1="229.5" x2="51" y2="229.5" stroke="#6a6a6a" stroke-width="1"/>
<line x1="47" y1="218.5" x2="51" y2="218.5" stroke="#6a6a6a" stroke-width="1"/>
<line x1="45" y1="208.5" x2="49" y2="208.5" stroke="#6a6a6a" stroke-width="1"/>
<line x1="47" y1="197.5" x2="51" y2="197.5" stroke="#6a6a6a" stroke-width="1"/>
<line x1="47" y1="187.5" x2="51" y2="187.5" stroke="#6a6a6a" stroke-width="1"/>
<line x1="47" y1="176.5" x2="51" y2="176.5" stroke="#6a6a6a" stroke-width="1"/>
<line x1="45" y1="166.5" x2="49" y2="166.5" stroke="#6a6a6a" stroke-width="1"/>
<line x1="47" y1="155.5" x2="51" y2="155.5" stroke="#6a6a6a" stroke-width="1"/>
<line x1="47" y1="144.5" x2="51" y2="144.5" stroke="#6a6a6a" stroke-width="1"/>
<line x1="47" y1="134.5" x2="51" y2="134.5" stroke="#6a6a6a" stroke-width="1"/>
<line x1="45" y1="123.5" x2="49" y2="123.5" stroke="#6a6a6a" stroke-width="1"/>
<line x1="47" y1="113.5" x2="51" y2="113.5" stroke="#6a6a6a" stroke-width="1"/>
<line x1="47" y1="102.5" x2="51" y2="102.5" stroke="#6a6a6a" stroke-width="1"/>
<line x1="47" y1="92.5" x2="51" y2="92.5" stroke="#6a6a6a" stroke-width="1"/>
<line x1="45" y1="81.5" x2="49" y2="81.5" stroke="#6a6a6a" stroke-width="1"/>
<line x1="47" y1="71.5" x2="51" y2="71.5" stroke="#6a6a6a" stroke-width="1"/>
<line x1="47" y1="60.5" x2="51" y2="60.5" stroke="#6a6a6a" stroke-width="1"/>
<line x1="47" y1="50.5" x2="51" y2="50.5" stroke="#6a6a6a" stroke-width="1"/>
<line x1="47" y1="39.5" x2="51" y2="39.5" stroke="#6a6a6a" stroke-width="1"/>
<line x1="939" y1="61.5" x2="945" y2="61.5" stroke="#6a6a6a" stroke-width="1"/>
<line x1="939" y1="84.5" x2="945" y2="84.5" stroke="#6a6a6a" stroke-width="1"/>
<line x1="939" y1="107.5" x2="945" y2="107.5" stroke="#6a6a6a" stroke-width="1"/>
<line x1="939" y1="131.5" x2="945" y2="131.5" stroke="#6a6a6a" stroke-width="1"/>
<line x1="939" y1="154.5" x2="945" y2="154.5" stroke="#6a6a6a" stroke-width="1"/>
<line x1="939" y1="178.5" x2="945" y2="178.5" stroke="#6a6a6a" stroke-width="1"/>
<line x1="939" y1="201.5" x2="945" y2="201.5" stroke="#6a6a6a" stroke-width="1"/>
<line x1="939" y1="224.5" x2="945" y2="224.5" stroke="#6a6a6a" stroke-width="1"/>
<line x1="939" y1="248.5" x2="945" y2="248.5" stroke="#6a6a6a" stroke-width="1"/>
<line x1="939" y1="271.5" x2="945" y2="271.5" stroke="#6a6a6a" stroke-width="1"/>
<line x1="939" y1="294.5" x2="945" y2="294.5" stroke="#6a6a6a" stroke-width="1"/>
<line x1="939" y1="318.5" x2="945" y2="318.5" stroke="#6a6a6a" stroke-width="1"/>
<line x1="939" y1="341.5" x2="945" y2="341.5" stroke="#6a6a6a" stroke-width="1"/>
<line x1="939" y1="365.5" x2="945" y2="365.5" stroke="#6a6a6a" stroke-width="1"/>
<line x1="939" y1="388.5" x2="945" y2="388.5" stroke="#6a6a6a" stroke-width="1"/>
<line x1="939" y1="411.5" x2="945" y2="411.5" stroke="#6a6a6a" stroke-width="1"/>
<line x1="939" y1="435.5" x2="945" y2="435.5" stroke="#6a6a6a" stroke-width="1"/>
<line x1="939" y1="458.5" x2="945" y2="458.5" stroke="#6a6a6a" stroke-width="1"/>
<line x1="939" y1="482.5" x2="945" y2="482.5" stroke="#6a6a6a" stroke-width="1"/>
<line x1="939" y1="49.5" x2="943" y2="49.5" stroke="#6a6a6a" stroke-width="1"/>
<line x1="939" y1="73.5" x2="943" y2="73.5" stroke="#6a6a6a" stroke-width="1"/>
<line x1="939" y1="96.5" x2="943" y2="96.5" stroke="#6a6a6a" stroke-width="1"/>
<line x1="939" y1="119.5" x2="943" y2="119.5" stroke="#6a6a6a" stroke-width="1"/>
<line x1="939" y1="143.5" x2="943" y2="143.5" stroke="#6a6a6a" stroke-width="1"/>
<line x1="939" y1="166.5" x2="943" y2="166.5" stroke="#6a6a6a" stroke-width="1"/>
<line x1="939" y1="190.5" x2="943" y2="190.5" stroke="#6a6a6a" stroke-width="1"/>
<line x1="939" y1="213.5" x2="943" y2="213.5" stroke="#6a6a6a" stroke-width="1"/>
<line x1="939" y1="236.5" x2="943" y2="236.5" stroke="#6a6a6a" stroke-width="1"/>
<line x1="939" y1="260.5" x2="943" y2="260.5" stroke="#6a6a6a" stroke-width="1"/>
<line x1="939" y1="283.5" x2="943" y2="283.5" stroke="#6a6a6a" stroke-width="1"/>
<line x1="939" y1="307.5" x2="943" y2="307.5" stroke="#6a6a6a" stroke-width="1"/>
<line x1="939" y1="330.5" x2="943" y2="330.5" stroke="#6a6a6a" stroke-width="1"/>
<line x1="939" y1="353.5" x2="943" y2="353.5" stroke="#6a6a6a" stroke-width="1"/>
<line x1="939" y1="377.5" x2="943" y2="377.5" stroke="#6a6a6a" stroke-width="1"/>
<line x1="939" y1="400.5" x2="943" y2="400.5" stroke="#6a6a6a" stroke-width="1"/>
<line x1="939" y1="424.5" x2="943" y2="424.5" stroke="#6a6a6a" stroke-width="1"/>
<line x1="939" y1="447.5" x2="943" y2="447.5" stroke="#6a6a6a" stroke-width="1"/>
<line x1="939" y1="470.5" x2="943" y2="470.5" stroke="#6a6a6a" stroke-width="1"/>
<line x1="939" y1="494.5" x2="943" y2="494.5" stroke="#6a6a6a" stroke-width="1"/>
<line x1="939" y1="544.5" x2="943" y2="544.5" stroke="#6a6a6a" stroke-width="1"/>
<line x1="939" y1="558.5" x2="945" y2="558.5" stroke="#6a6a6a" stroke-width="1"/>
<line x1="939" y1="571.5" x2="943" y2="571.5" stroke="#6a6a6a" stroke-width="1"/>
<line x1="939" y1="584.5" x2="943" y2="584.5" stroke="#6a6a6a" stroke-width="1"/>
<line x1="939" y1="597.5" x2="945" y2="597.5" stroke="#6a6a6a" stroke-width="1"/>
<line x1="939" y1="611.5" x2="943" y2="611.5" stroke="#6a6a6a" stroke-width="1"/>
<line x1="939" y1="624.5" x2="943" y2="624.5" stroke="#6a6a6a" stroke-width="1"/>
<line x1="939" y1="637.5" x2="945" y2="637.5" stroke="#6a6a6a" stroke-width="1"/>
<line x1="939" y1="650.5" x2="943" y2="650.5" stroke="#6a6a6a" stroke-width="1"/>
<line x1="939" y1="664.5" x2="943" y2="664.5" stroke="#6a6a6a" stroke-width="1"/>
<line x1="939" y1="677.5" x2="943" y2="677.5" stroke="#6a6a6a" stroke-width="1"/>
</g>
<g shape-rendering="crispEdges">
<rect x="9" y="509" width="39" height="14" fill="#1a1a1a" />
<rect x="10" y="510" width="37" height="12" fill="#dedede" />
</g>
<text x="37.36" y="505.7" font-family='"Liberation Sans", sans-serif' font-size="11" fill="#666666" font-weight="normal" text-anchor="start" textLength="6.19" lengthAdjust="spacingAndGlyphs" >0</text>
<text x="22.56" y="463.64" font-family='"Liberation Sans", sans-serif' font-size="11" fill="#666666" font-weight="normal" text-anchor="start" textLength="21.11" lengthAdjust="spacingAndGlyphs" >100</text>
<text x="22.68" y="421.58" font-family='"Liberation Sans", sans-serif' font-size="11" fill="#666666" font-weight="normal" text-anchor="start" textLength="21.37" lengthAdjust="spacingAndGlyphs" >200</text>
<text x="22.75" y="379.52" font-family='"Liberation Sans", sans-serif' font-size="11" fill="#666666" font-weight="normal" text-anchor="start" textLength="21.25" lengthAdjust="spacingAndGlyphs" >300</text>
<text x="22.88" y="337.46" font-family='"Liberation Sans", sans-serif' font-size="11" fill="#666666" font-weight="normal" text-anchor="start" textLength="21.06" lengthAdjust="spacingAndGlyphs" >400</text>
<text x="22.71" y="295.4" font-family='"Liberation Sans", sans-serif' font-size="11" fill="#666666" font-weight="normal" text-anchor="start" textLength="21.31" lengthAdjust="spacingAndGlyphs" >500</text>
<text x="22.73" y="253.33999999999997" font-family='"Liberation Sans", sans-serif' font-size="11" fill="#666666" font-weight="normal" text-anchor="start" textLength="21.28" lengthAdjust="spacingAndGlyphs" >600</text>
<text x="22.61" y="211.27999999999997" font-family='"Liberation Sans", sans-serif' font-size="11" fill="#666666" font-weight="normal" text-anchor="start" textLength="21.02" lengthAdjust="spacingAndGlyphs" >700</text>
<text x="22.74" y="169.21999999999997" font-family='"Liberation Sans", sans-serif' font-size="11" fill="#666666" font-weight="normal" text-anchor="start" textLength="21.27" lengthAdjust="spacingAndGlyphs" >800</text>
<text x="22.72" y="127.15999999999998" font-family='"Liberation Sans", sans-serif' font-size="11" fill="#666666" font-weight="normal" text-anchor="start" textLength="21.3" lengthAdjust="spacingAndGlyphs" >900</text>
<text x="15.75" y="85.09999999999998" font-family='"Liberation Sans", sans-serif' font-size="11" fill="#666666" font-weight="normal" text-anchor="start" textLength="28.26" lengthAdjust="spacingAndGlyphs" >1000</text>
<text x="944.76" y="65.0" font-family='"Liberation Sans", sans-serif' font-size="11" fill="#666666" font-weight="normal" text-anchor="start" textLength="31.67" lengthAdjust="spacingAndGlyphs" >11.00</text>
<text x="944.75" y="88.0" font-family='"Liberation Sans", sans-serif' font-size="11" fill="#666666" font-weight="normal" text-anchor="start" textLength="31.62" lengthAdjust="spacingAndGlyphs" >10.80</text>
<text x="944.75" y="111.0" font-family='"Liberation Sans", sans-serif' font-size="11" fill="#666666" font-weight="normal" text-anchor="start" textLength="31.62" lengthAdjust="spacingAndGlyphs" >10.60</text>
<text x="944.75" y="135.0" font-family='"Liberation Sans", sans-serif' font-size="11" fill="#666666" font-weight="normal" text-anchor="start" textLength="31.62" lengthAdjust="spacingAndGlyphs" >10.40</text>
<text x="944.75" y="158.0" font-family='"Liberation Sans", sans-serif' font-size="11" fill="#666666" font-weight="normal" text-anchor="start" textLength="31.62" lengthAdjust="spacingAndGlyphs" >10.20</text>
<text x="944.75" y="182.0" font-family='"Liberation Sans", sans-serif' font-size="11" fill="#666666" font-weight="normal" text-anchor="start" textLength="31.62" lengthAdjust="spacingAndGlyphs" >10.00</text>
<text x="944.92" y="205.0" font-family='"Liberation Sans", sans-serif' font-size="11" fill="#666666" font-weight="normal" text-anchor="start" textLength="24.12" lengthAdjust="spacingAndGlyphs" >9.80</text>
<text x="944.92" y="228.0" font-family='"Liberation Sans", sans-serif' font-size="11" fill="#666666" font-weight="normal" text-anchor="start" textLength="24.12" lengthAdjust="spacingAndGlyphs" >9.60</text>
<text x="944.92" y="252.0" font-family='"Liberation Sans", sans-serif' font-size="11" fill="#666666" font-weight="normal" text-anchor="start" textLength="24.12" lengthAdjust="spacingAndGlyphs" >9.40</text>
<text x="944.92" y="275.0" font-family='"Liberation Sans", sans-serif' font-size="11" fill="#666666" font-weight="normal" text-anchor="start" textLength="24.12" lengthAdjust="spacingAndGlyphs" >9.20</text>
<text x="944.92" y="298.0" font-family='"Liberation Sans", sans-serif' font-size="11" fill="#666666" font-weight="normal" text-anchor="start" textLength="24.12" lengthAdjust="spacingAndGlyphs" >9.00</text>
<text x="944.94" y="322.0" font-family='"Liberation Sans", sans-serif' font-size="11" fill="#666666" font-weight="normal" text-anchor="start" textLength="24.08" lengthAdjust="spacingAndGlyphs" >8.80</text>
<text x="944.94" y="345.0" font-family='"Liberation Sans", sans-serif' font-size="11" fill="#666666" font-weight="normal" text-anchor="start" textLength="24.08" lengthAdjust="spacingAndGlyphs" >8.60</text>
<text x="944.94" y="369.0" font-family='"Liberation Sans", sans-serif' font-size="11" fill="#666666" font-weight="normal" text-anchor="start" textLength="24.08" lengthAdjust="spacingAndGlyphs" >8.40</text>
<text x="944.94" y="392.0" font-family='"Liberation Sans", sans-serif' font-size="11" fill="#666666" font-weight="normal" text-anchor="start" textLength="24.08" lengthAdjust="spacingAndGlyphs" >8.20</text>
<text x="944.94" y="415.0" font-family='"Liberation Sans", sans-serif' font-size="11" fill="#666666" font-weight="normal" text-anchor="start" textLength="24.08" lengthAdjust="spacingAndGlyphs" >8.00</text>
<text x="944.81" y="439.0" font-family='"Liberation Sans", sans-serif' font-size="11" fill="#666666" font-weight="normal" text-anchor="start" textLength="24.3" lengthAdjust="spacingAndGlyphs" >7.80</text>
<text x="944.81" y="462.0" font-family='"Liberation Sans", sans-serif' font-size="11" fill="#666666" font-weight="normal" text-anchor="start" textLength="24.3" lengthAdjust="spacingAndGlyphs" >7.60</text>
<text x="944.81" y="486.0" font-family='"Liberation Sans", sans-serif' font-size="11" fill="#666666" font-weight="normal" text-anchor="start" textLength="24.3" lengthAdjust="spacingAndGlyphs" >7.40</text>
<text x="944.86" y="561.0" font-family='"Liberation Sans", sans-serif' font-size="11" fill="#666666" font-weight="normal" text-anchor="start" textLength="31.1" lengthAdjust="spacingAndGlyphs" >0.200</text>
<text x="944.86" y="601.0" font-family='"Liberation Sans", sans-serif' font-size="11" fill="#666666" font-weight="normal" text-anchor="start" textLength="31.1" lengthAdjust="spacingAndGlyphs" >0.000</text>
<text x="944.88" y="641.0" font-family='"Liberation Sans", sans-serif' font-size="11" fill="#666666" font-weight="normal" text-anchor="start" textLength="36.89" lengthAdjust="spacingAndGlyphs" >-0.200</text>
<text x="12.27" y="679.6" font-family='"Liberation Sans", sans-serif' font-size="11" fill="#666666" font-weight="normal" text-anchor="start" textLength="13.88" lengthAdjust="spacing" >16</text>
<text x="51.76" y="512.8" font-family='"Liberation Sans", sans-serif' font-size="11" fill="#666666" font-weight="normal" text-anchor="start" textLength="13.52" lengthAdjust="spacing" >20</text>
<text x="30.46" y="679.6" font-family='"Liberation Sans", sans-serif' font-size="11" fill="#666666" font-weight="normal" text-anchor="start" textLength="13.52" lengthAdjust="spacing" >20</text>
<text x="108.51" y="512.8" font-family='"Liberation Sans", sans-serif' font-size="11" fill="#666666" font-weight="normal" text-anchor="start" textLength="7.42" lengthAdjust="spacing" >3</text>
<text x="108.51" y="679.6" font-family='"Liberation Sans", sans-serif' font-size="11" fill="#666666" font-weight="normal" text-anchor="start" textLength="7.42" lengthAdjust="spacing" >3</text>
<text x="196.27" y="512.8" font-family='"Liberation Sans", sans-serif' font-size="11" fill="#666666" font-weight="normal" text-anchor="start" textLength="14.1" lengthAdjust="spacing" >17</text>
<text x="196.27" y="679.6" font-family='"Liberation Sans", sans-serif' font-size="11" fill="#666666" font-weight="normal" text-anchor="start" textLength="14.1" lengthAdjust="spacing" >17</text>
<text x="283.46" y="512.8" font-family='"Liberation Sans", sans-serif' font-size="11" fill="#666666" font-weight="normal" text-anchor="start" textLength="7.68" lengthAdjust="spacing" >2</text>
<text x="283.46" y="679.6" font-family='"Liberation Sans", sans-serif' font-size="11" fill="#666666" font-weight="normal" text-anchor="start" textLength="7.68" lengthAdjust="spacing" >2</text>
<text x="362.27" y="512.8" font-family='"Liberation Sans", sans-serif' font-size="11" fill="#666666" font-weight="normal" text-anchor="start" textLength="13.87" lengthAdjust="spacing" >15</text>
<text x="362.27" y="679.6" font-family='"Liberation Sans", sans-serif' font-size="11" fill="#666666" font-weight="normal" text-anchor="start" textLength="13.87" lengthAdjust="spacing" >15</text>
<text x="440.46" y="512.8" font-family='"Liberation Sans", sans-serif' font-size="11" fill="#666666" font-weight="normal" text-anchor="start" textLength="13.67" lengthAdjust="spacing" >29</text>
<text x="440.46" y="679.6" font-family='"Liberation Sans", sans-serif' font-size="11" fill="#666666" font-weight="normal" text-anchor="start" textLength="13.67" lengthAdjust="spacing" >29</text>
<text x="528.27" y="512.8" font-family='"Liberation Sans", sans-serif' font-size="11" fill="#666666" font-weight="normal" text-anchor="start" textLength="13.92" lengthAdjust="spacing" >13</text>
<text x="528.27" y="679.6" font-family='"Liberation Sans", sans-serif' font-size="11" fill="#666666" font-weight="normal" text-anchor="start" textLength="13.92" lengthAdjust="spacing" >13</text>
<text x="606.46" y="512.8" font-family='"Liberation Sans", sans-serif' font-size="11" fill="#666666" font-weight="normal" text-anchor="start" textLength="13.65" lengthAdjust="spacing" >26</text>
<text x="606.46" y="679.6" font-family='"Liberation Sans", sans-serif' font-size="11" fill="#666666" font-weight="normal" text-anchor="start" textLength="13.65" lengthAdjust="spacing" >26</text>
<text x="694.49" y="512.8" font-family='"Liberation Sans", sans-serif' font-size="11" fill="#666666" font-weight="normal" text-anchor="start" textLength="7.32" lengthAdjust="spacing" >9</text>
<text x="694.49" y="679.6" font-family='"Liberation Sans", sans-serif' font-size="11" fill="#666666" font-weight="normal" text-anchor="start" textLength="7.32" lengthAdjust="spacing" >9</text>
<text x="781.46" y="512.8" font-family='"Liberation Sans", sans-serif' font-size="11" fill="#666666" font-weight="normal" text-anchor="start" textLength="13.68" lengthAdjust="spacing" >23</text>
<text x="781.46" y="679.6" font-family='"Liberation Sans", sans-serif' font-size="11" fill="#666666" font-weight="normal" text-anchor="start" textLength="13.68" lengthAdjust="spacing" >23</text>
<text x="868.3" y="512.8" font-family='"Liberation Sans", sans-serif' font-size="11" fill="#666666" font-weight="normal" text-anchor="start" textLength="8.34" lengthAdjust="spacing" >7</text>
<text x="868.3" y="679.6" font-family='"Liberation Sans", sans-serif' font-size="11" fill="#666666" font-weight="normal" text-anchor="start" textLength="8.34" lengthAdjust="spacing" >7</text>
<text x="51.76" y="528.6" font-family='"Liberation Sans", sans-serif' font-size="11" fill="#666666" font-weight="normal" text-anchor="start" textLength="86.68" lengthAdjust="spacing" >2013 May June</text>
<text x="286.78" y="528.6" font-family='"Liberation Sans", sans-serif' font-size="11" fill="#666666" font-weight="normal" text-anchor="start" textLength="22.58" lengthAdjust="spacing" >July</text>
<text x="471.02" y="528.6" font-family='"Liberation Sans", sans-serif' font-size="11" fill="#666666" font-weight="normal" text-anchor="start" textLength="39.39" lengthAdjust="spacing" >August</text>
<text x="655.16" y="528.6" font-family='"Liberation Sans", sans-serif' font-size="11" fill="#666666" font-weight="normal" text-anchor="start" textLength="61.71" lengthAdjust="spacing" >September</text>
<text x="838.03" y="528.6" font-family='"Liberation Sans", sans-serif' font-size="11" fill="#666666" font-weight="normal" text-anchor="start" textLength="44.13" lengthAdjust="spacing" >October</text>
<text x="12.96" y="695.4" font-family='"Liberation Sans", sans-serif' font-size="11" fill="#666666" font-weight="normal" text-anchor="start" textLength="54.05" lengthAdjust="spacing" >2013 May</text>
<text x="112.38" y="695.4" font-family='"Liberation Sans", sans-serif' font-size="11" fill="#666666" font-weight="normal" text-anchor="start" textLength="26.48" lengthAdjust="spacing" >June</text>
<text x="286.78" y="695.4" font-family='"Liberation Sans", sans-serif' font-size="11" fill="#666666" font-weight="normal" text-anchor="start" textLength="22.58" lengthAdjust="spacing" >July</text>
<text x="471.02" y="695.4" font-family='"Liberation Sans", sans-serif' font-size="11" fill="#666666" font-weight="normal" text-anchor="start" textLength="39.39" lengthAdjust="spacing" >August</text>
<text x="655.16" y="695.4" font-family='"Liberation Sans", sans-serif' font-size="11" fill="#666666" font-weight="normal" text-anchor="start" textLength="61.71" lengthAdjust="spacing" >September</text>
<text x="838.03" y="695.4" font-family='"Liberation Sans", sans-serif' font-size="11" fill="#666666" font-weight="normal" text-anchor="start" textLength="44.13" lengthAdjust="spacing" >October</text>
<text x="10.96" y="520" font-family='"Liberation Sans", sans-serif' font-size="11" fill="#666" font-weight="normal" text-anchor="start" textLength="35.4" lengthAdjust="spacing" >x100K</text>
<g shape-rendering="crispEdges">
<rect x="27" y="475" width="23" height="15" fill="#6a1038" />
<rect x="28" y="476" width="21" height="13" fill="#e0207f" />
</g>
<g shape-rendering="crispEdges">
<rect x="938" y="270" width="34" height="14" fill="#1d4f7a" />
<rect x="939" y="271" width="32" height="12" fill="#2b8be6" />
</g>
<g shape-rendering="crispEdges">
<rect x="938" y="361" width="34" height="15" fill="#0a400a" />
<rect x="939" y="362" width="32" height="13" fill="#0a7f0a" />
</g>
<g shape-rendering="crispEdges">
<rect x="938" y="382" width="34" height="15" fill="#701a10" />
<rect x="939" y="383" width="32" height="13" fill="#ee0000" />
</g>
<g shape-rendering="crispEdges">
<rect x="938" y="544" width="41" height="15" fill="#0a400a" />
<rect x="939" y="545" width="39" height="13" fill="#0a7f0a" />
</g>
<g shape-rendering="crispEdges">
<rect x="938" y="579" width="41" height="15" fill="#1d4f7a" />
<rect x="939" y="580" width="39" height="13" fill="#2b8be6" />
</g>
<g shape-rendering="crispEdges">
<rect x="938" y="602" width="46" height="15" fill="#701a10" />
<rect x="939" y="603" width="44" height="13" fill="#ee0000" />
</g>
<text x="31.2" y="486.4" font-family='"Liberation Sans", sans-serif' font-size="11.5" fill="#fff" font-weight="normal" text-anchor="start" textLength="13.34" lengthAdjust="spacing" >47</text>
<text x="943.96" y="280.4" font-family='"Liberation Sans", sans-serif' font-size="11.5" fill="#fff" font-weight="normal" text-anchor="start" textLength="24.35" lengthAdjust="spacing" >9.15</text>
<text x="943.98" y="372.4" font-family='"Liberation Sans", sans-serif' font-size="11.5" fill="#eaffea" font-weight="normal" text-anchor="start" textLength="24.6" lengthAdjust="spacing" >8.27</text>
<text x="943.98" y="393.4" font-family='"Liberation Sans", sans-serif' font-size="11.5" fill="#fff0f0" font-weight="normal" text-anchor="start" textLength="24.0" lengthAdjust="spacing" >8.20</text>
<text x="944.14" y="555.4" font-family='"Liberation Sans", sans-serif' font-size="11.5" fill="#eaffea" font-weight="normal" text-anchor="start" textLength="31.36" lengthAdjust="spacing" >0.231</text>
<text x="944.14" y="590.4" font-family='"Liberation Sans", sans-serif' font-size="11.5" fill="#fff" font-weight="normal" text-anchor="start" textLength="31.24" lengthAdjust="spacing" >0.054</text>
<text x="944.11" y="613.4" font-family='"Liberation Sans", sans-serif' font-size="11.5" fill="#fff" font-weight="normal" text-anchor="start" textLength="36.11" lengthAdjust="spacing" >-0.062</text>
<text x="54.55" y="42.6" font-family='"Liberation Sans", sans-serif' font-size="10.5" fill="#5cb85c" font-weight="normal" text-anchor="start" textLength="21.8" lengthAdjust="spacing" >DRT</text>
<text x="81.54" y="42.6" font-family='"Liberation Sans", sans-serif' font-size="10.5" fill="#aa2a2a" font-weight="normal" text-anchor="start" textLength="71.73" lengthAdjust="spacing" >EMA(10) 8.20</text>
<text x="157.24" y="42.6" font-family='"Liberation Sans", sans-serif' font-size="10.5" fill="#1a7a1a" font-weight="normal" text-anchor="start" textLength="73.05" lengthAdjust="spacing" >EMA(50) 8.27</text>
<text x="234.44" y="42.6" font-family='"Liberation Sans", sans-serif' font-size="10.5" fill="#e6a6cf" font-weight="normal" text-anchor="start" textLength="41.09" lengthAdjust="spacing" >V:46.76</text>
<text x="12.09" y="542.8" font-family='"Liberation Sans", sans-serif' font-size="10" fill="#2f6f9f" font-weight="normal" text-anchor="start" textLength="77.92" lengthAdjust="spacing" >MACD(12,26,9)</text>
<text x="93.69" y="542.8" font-family='"Liberation Sans", sans-serif' font-size="10" fill="#3d9ad6" font-weight="normal" text-anchor="start" textLength="58.01" lengthAdjust="spacing" >DIFF:0.054</text>
<text x="155.09" y="542.8" font-family='"Liberation Sans", sans-serif' font-size="10" fill="#b02828" font-weight="normal" text-anchor="start" textLength="59.26" lengthAdjust="spacing" >DEA:-0.062</text>
<text x="218.19" y="542.8" font-family='"Liberation Sans", sans-serif' font-size="10" fill="#1a7a1a" font-weight="normal" text-anchor="start" textLength="64.09" lengthAdjust="spacing" >MACD:0.231</text>
<text x="8.81" y="13.9" font-family='"Liberation Sans", sans-serif' font-size="16.5" fill="#41709a" font-weight="normal" text-anchor="start" textLength="33.4" lengthAdjust="spacingAndGlyphs" >DRT</text>
<text x="8.88" y="25.8" font-family='"Liberation Sans", sans-serif' font-size="11" fill="#3f6f94" font-weight="bold" text-anchor="start" textLength="31.09" lengthAdjust="spacingAndGlyphs" >Last:</text>
<text x="41.76" y="25.8" font-family='"Liberation Sans", sans-serif' font-size="11.5" fill="#5cb85c" font-weight="normal" text-anchor="start" textLength="24.35" lengthAdjust="spacing" >9.15</text>
<text x="70.06" y="25.8" font-family='"Liberation Sans", sans-serif' font-size="11" fill="#3f6f94" font-weight="bold" text-anchor="start" textLength="29.03" lengthAdjust="spacingAndGlyphs" >Chg:</text>
<text x="100.17" y="25.8" font-family='"Liberation Sans", sans-serif' font-size="11.5" fill="#5cb85c" font-weight="normal" text-anchor="start" textLength="88.46" lengthAdjust="spacing" >1.10 (13.66 %)</text>
<text x="194.47" y="25.8" font-family='"Liberation Sans", sans-serif' font-size="11" fill="#3f6f94" font-weight="bold" text-anchor="start" textLength="36.77" lengthAdjust="spacingAndGlyphs" >Open:</text>
<text x="232.88" y="25.8" font-family='"Liberation Sans", sans-serif' font-size="11.5" fill="#a0a0a0" font-weight="normal" text-anchor="start" textLength="24.32" lengthAdjust="spacing" >8.05</text>
<text x="261.08" y="25.8" font-family='"Liberation Sans", sans-serif' font-size="11" fill="#3f6f94" font-weight="bold" text-anchor="start" textLength="33.09" lengthAdjust="spacingAndGlyphs" >High:</text>
<text x="296.96" y="25.8" font-family='"Liberation Sans", sans-serif' font-size="11.5" fill="#a0a0a0" font-weight="normal" text-anchor="start" textLength="24.75" lengthAdjust="spacing" >9.15</text>
<text x="324.82" y="25.8" font-family='"Liberation Sans", sans-serif' font-size="11" fill="#3f6f94" font-weight="bold" text-anchor="start" textLength="29.76" lengthAdjust="spacingAndGlyphs" >Low:</text>
<text x="357.28" y="25.8" font-family='"Liberation Sans", sans-serif' font-size="11.5" fill="#a0a0a0" font-weight="normal" text-anchor="start" textLength="24.32" lengthAdjust="spacing" >8.05</text>
<text x="386.01" y="25.8" font-family='"Liberation Sans", sans-serif' font-size="11" fill="#3f6f94" font-weight="bold" text-anchor="start" textLength="52.79" lengthAdjust="spacingAndGlyphs" >Volume:</text>
<text x="438.9" y="25.8" font-family='"Liberation Sans", sans-serif' font-size="11.5" fill="#a0a0a0" font-weight="normal" text-anchor="start" textLength="57.51" lengthAdjust="spacing" >4,675,500</text>
<text x="504.19" y="25.8" font-family='"Liberation Sans", sans-serif' font-size="11" fill="#3f6f94" font-weight="bold" text-anchor="start" textLength="72.28" lengthAdjust="spacingAndGlyphs" >Prev Close:</text>
<text x="575.88" y="25.8" font-family='"Liberation Sans", sans-serif' font-size="11.5" fill="#a0a0a0" font-weight="normal" text-anchor="start" textLength="25.21" lengthAdjust="spacing" >8.05</text>
<text x="828.63" y="9.9" font-family='"Liberation Sans", sans-serif' font-size="11" fill="#5a5a5a" font-weight="normal" text-anchor="start" textLength="158.95" lengthAdjust="spacing" >Tuesday 15-Oct-2013 00:00</text>
<text x="870.65" y="24.8" font-family='"Liberation Serif", serif' font-size="15.5" fill="#222" font-weight="normal" text-anchor="start" textLength="111.27" lengthAdjust="spacingAndGlyphs" >Last Update:21:7</text>
</svg>
</body></html>
